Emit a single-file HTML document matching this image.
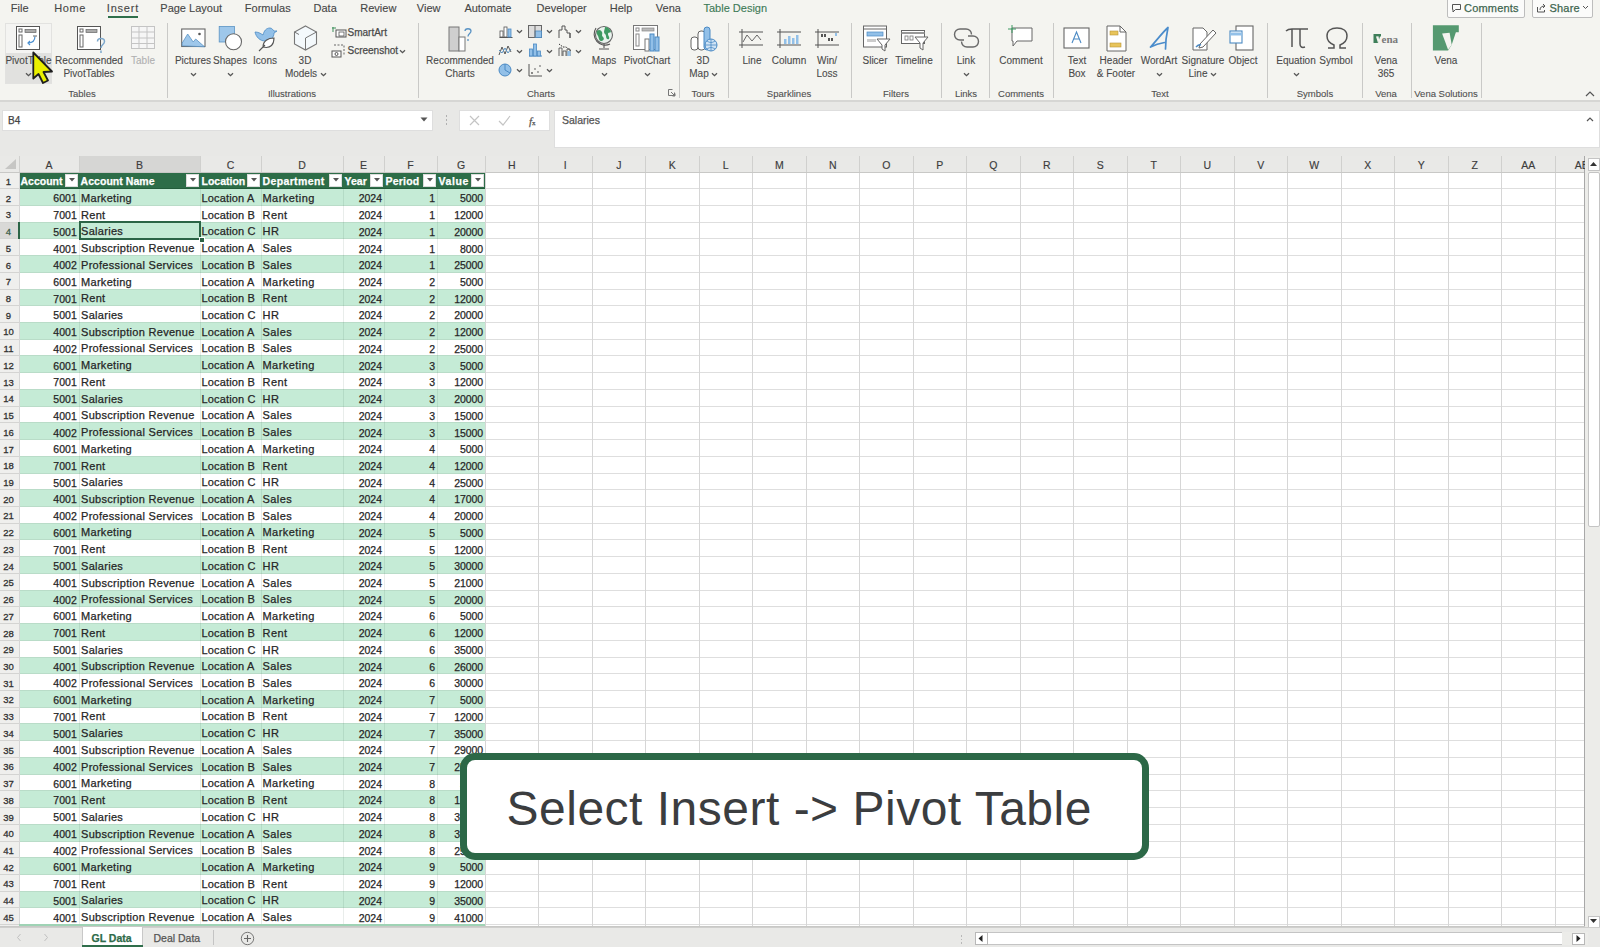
<!DOCTYPE html><html><head><meta charset="utf-8"><style>
html,body{margin:0;padding:0} body{width:1600px;height:947px;overflow:hidden;position:relative;background:#f4f4f0;font-family:"Liberation Sans", sans-serif}
.t{position:absolute;white-space:nowrap;-webkit-text-stroke:0.25px currentColor}.b{position:absolute}
</style></head><body>
<div class="t" style="left:10.80px;top:3.19px;font-size:11px;line-height:11px;color:#474747;font-weight:normal;-webkit-text-stroke:0.12px currentColor;letter-spacing:0px">File</div>
<div class="t" style="left:54.30px;top:3.19px;font-size:11px;line-height:11px;color:#474747;font-weight:normal;-webkit-text-stroke:0.12px currentColor;letter-spacing:0.6px">Home</div>
<div class="t" style="left:106.80px;top:3.19px;font-size:11px;line-height:11px;color:#474747;font-weight:normal;-webkit-text-stroke:0.12px currentColor;letter-spacing:0.8px">Insert</div>
<div class="t" style="left:160.30px;top:3.19px;font-size:11px;line-height:11px;color:#474747;font-weight:normal;-webkit-text-stroke:0.12px currentColor;letter-spacing:0px">Page Layout</div>
<div class="t" style="left:244.80px;top:3.19px;font-size:11px;line-height:11px;color:#474747;font-weight:normal;-webkit-text-stroke:0.12px currentColor;letter-spacing:0px">Formulas</div>
<div class="t" style="left:313.55px;top:3.19px;font-size:11px;line-height:11px;color:#474747;font-weight:normal;-webkit-text-stroke:0.12px currentColor;letter-spacing:0px">Data</div>
<div class="t" style="left:360.30px;top:3.19px;font-size:11px;line-height:11px;color:#474747;font-weight:normal;-webkit-text-stroke:0.12px currentColor;letter-spacing:0px">Review</div>
<div class="t" style="left:416.80px;top:3.19px;font-size:11px;line-height:11px;color:#474747;font-weight:normal;-webkit-text-stroke:0.12px currentColor;letter-spacing:0px">View</div>
<div class="t" style="left:464.40px;top:3.19px;font-size:11px;line-height:11px;color:#474747;font-weight:normal;-webkit-text-stroke:0.12px currentColor;letter-spacing:0px">Automate</div>
<div class="t" style="left:536.60px;top:3.19px;font-size:11px;line-height:11px;color:#474747;font-weight:normal;-webkit-text-stroke:0.12px currentColor;letter-spacing:0px">Developer</div>
<div class="t" style="left:609.80px;top:3.19px;font-size:11px;line-height:11px;color:#474747;font-weight:normal;-webkit-text-stroke:0.12px currentColor;letter-spacing:0px">Help</div>
<div class="t" style="left:655.80px;top:3.19px;font-size:11px;line-height:11px;color:#474747;font-weight:normal;-webkit-text-stroke:0.12px currentColor;letter-spacing:0px">Vena</div>
<div class="t" style="left:703.50px;top:3.19px;font-size:11px;line-height:11px;color:#3d7a56;font-weight:normal;-webkit-text-stroke:0.12px currentColor;letter-spacing:0px">Table Design</div>
<div class="b" style="left:108.00px;top:16.00px;width:30.00px;height:2.00px;background:#2f6f4b"></div>
<div class="b" style="left:1447.00px;top:-2.00px;width:78.00px;height:19.50px;border:1px solid #bdbdbd;background:#fbfbfa;box-sizing:border-box;border-radius:2px"></div>
<div class="t" style="left:1464.00px;top:2.69px;font-size:11px;line-height:11px;color:#3f6650;font-weight:normal;letter-spacing:0.2px">Comments</div>
<svg class="b" style="left:1451px;top:3px;" width="11" height="10" viewBox="0 0 11 10"><path d="M1.5 1.5h8v5h-5l-2.5 2.5v-2.5h-0.5z" fill="none" stroke="#555" stroke-width="1"/></svg>
<div class="b" style="left:1532.00px;top:-2.00px;width:61.00px;height:19.50px;border:1px solid #bdbdbd;background:#fbfbfa;box-sizing:border-box;border-radius:2px"></div>
<div class="t" style="left:1549.50px;top:2.69px;font-size:11px;line-height:11px;color:#3f6650;font-weight:normal;letter-spacing:0.2px">Share</div>
<svg class="b" style="left:1536px;top:3px;" width="11" height="10" viewBox="0 0 11 10"><path d="M1.5 4v5h7v-2" fill="none" stroke="#555"/><path d="M4 7c0-3 2-4 5-4M7 1l2 2-2 2" fill="none" stroke="#555"/></svg>
<svg class="b" style="left:1582px;top:5px;" width="7" height="5" viewBox="0 0 7 5"><path d="M1 1l2.5 2.5L6 1" fill="none" stroke="#555"/></svg>
<div class="b" style="left:166.50px;top:23.00px;width:1.20px;height:75.00px;background:#c9c9c7"></div>
<div class="b" style="left:418.00px;top:23.00px;width:1.20px;height:75.00px;background:#c9c9c7"></div>
<div class="b" style="left:678.50px;top:23.00px;width:1.20px;height:75.00px;background:#c9c9c7"></div>
<div class="b" style="left:727.50px;top:23.00px;width:1.20px;height:75.00px;background:#c9c9c7"></div>
<div class="b" style="left:851.00px;top:23.00px;width:1.20px;height:75.00px;background:#c9c9c7"></div>
<div class="b" style="left:941.00px;top:23.00px;width:1.20px;height:75.00px;background:#c9c9c7"></div>
<div class="b" style="left:989.30px;top:23.00px;width:1.20px;height:75.00px;background:#c9c9c7"></div>
<div class="b" style="left:1052.50px;top:23.00px;width:1.20px;height:75.00px;background:#c9c9c7"></div>
<div class="b" style="left:1267.00px;top:23.00px;width:1.20px;height:75.00px;background:#c9c9c7"></div>
<div class="b" style="left:1361.50px;top:23.00px;width:1.20px;height:75.00px;background:#c9c9c7"></div>
<div class="b" style="left:1410.50px;top:23.00px;width:1.20px;height:75.00px;background:#c9c9c7"></div>
<div class="b" style="left:1480.50px;top:23.00px;width:1.20px;height:75.00px;background:#c9c9c7"></div>
<div class="t" style="left:22.00px;top:89.16px;width:120px;text-align:center;font-size:9.5px;line-height:9.5px;color:#4f4f4f;font-weight:normal;-webkit-text-stroke:0.1px currentColor">Tables</div>
<div class="t" style="left:232.00px;top:89.16px;width:120px;text-align:center;font-size:9.5px;line-height:9.5px;color:#4f4f4f;font-weight:normal;-webkit-text-stroke:0.1px currentColor">Illustrations</div>
<div class="t" style="left:481.00px;top:89.16px;width:120px;text-align:center;font-size:9.5px;line-height:9.5px;color:#4f4f4f;font-weight:normal;-webkit-text-stroke:0.1px currentColor">Charts</div>
<div class="t" style="left:643.00px;top:89.16px;width:120px;text-align:center;font-size:9.5px;line-height:9.5px;color:#4f4f4f;font-weight:normal;-webkit-text-stroke:0.1px currentColor">Tours</div>
<div class="t" style="left:729.00px;top:89.16px;width:120px;text-align:center;font-size:9.5px;line-height:9.5px;color:#4f4f4f;font-weight:normal;-webkit-text-stroke:0.1px currentColor">Sparklines</div>
<div class="t" style="left:836.00px;top:89.16px;width:120px;text-align:center;font-size:9.5px;line-height:9.5px;color:#4f4f4f;font-weight:normal;-webkit-text-stroke:0.1px currentColor">Filters</div>
<div class="t" style="left:906.00px;top:89.16px;width:120px;text-align:center;font-size:9.5px;line-height:9.5px;color:#4f4f4f;font-weight:normal;-webkit-text-stroke:0.1px currentColor">Links</div>
<div class="t" style="left:961.00px;top:89.16px;width:120px;text-align:center;font-size:9.5px;line-height:9.5px;color:#4f4f4f;font-weight:normal;-webkit-text-stroke:0.1px currentColor">Comments</div>
<div class="t" style="left:1100.00px;top:89.16px;width:120px;text-align:center;font-size:9.5px;line-height:9.5px;color:#4f4f4f;font-weight:normal;-webkit-text-stroke:0.1px currentColor">Text</div>
<div class="t" style="left:1255.00px;top:89.16px;width:120px;text-align:center;font-size:9.5px;line-height:9.5px;color:#4f4f4f;font-weight:normal;-webkit-text-stroke:0.1px currentColor">Symbols</div>
<div class="t" style="left:1326.00px;top:89.16px;width:120px;text-align:center;font-size:9.5px;line-height:9.5px;color:#4f4f4f;font-weight:normal;-webkit-text-stroke:0.1px currentColor">Vena</div>
<div class="t" style="left:1386.00px;top:89.16px;width:120px;text-align:center;font-size:9.5px;line-height:9.5px;color:#4f4f4f;font-weight:normal;-webkit-text-stroke:0.1px currentColor">Vena Solutions</div>
<svg class="b" style="left:668px;top:89px;" width="8" height="8" viewBox="0 0 8 8"><path d="M0.5 0.5h4M0.5 0.5v6h6v-3" fill="none" stroke="#777"/><path d="M3 3l4 4M7 4.5v2.5h-2.5" fill="none" stroke="#777"/></svg>
<svg class="b" style="left:1585px;top:91px;" width="10" height="6" viewBox="0 0 10 6"><path d="M1 5l4-4 4 4" fill="none" stroke="#555" stroke-width="1.2"/></svg>
<div class="b" style="left:5.00px;top:22.50px;width:47.00px;height:61.00px;border:1px solid #e2e2e0;box-sizing:border-box;background:#f4f4f2"></div>
<div class="b" style="left:5.50px;top:53.00px;width:46.00px;height:30.00px;background:#e1e1df"></div>
<svg class="b" style="left:16px;top:26px;" width="26" height="25" viewBox="0 0 26 25"><rect x="0.5" y="0.5" width="23" height="23" fill="#fff" stroke="#555"/><rect x="3" y="3" width="3" height="3" fill="none" stroke="#666"/><rect x="9" y="3.5" width="11" height="3" fill="#aaa" stroke="#666" stroke-width="0.7"/><rect x="3" y="9" width="3" height="12" fill="none" stroke="#666"/><path d="M19 10c0 5-2 7-7 7M14 15l-2 2 2 2" fill="none" stroke="#4a8fd0" stroke-width="1.2"/><path d="M17 10h4" stroke="#999" stroke-width="1.5"/></svg>
<div class="t" style="left:-31.50px;top:55.53px;width:120px;text-align:center;font-size:10px;line-height:10px;color:#4a4a4a;font-weight:normal;-webkit-text-stroke:0.1px currentColor">PivotTable</div>
<svg class="b" style="left:25px;top:72px;" width="7" height="5" viewBox="0 0 7 5"><path d="M1 1.2l2.5 2.5L6 1.2" fill="none" stroke="#555" stroke-width="1.3"/></svg>
<svg class="b" style="left:77px;top:26px;" width="30" height="29" viewBox="0 0 30 29"><rect x="0.5" y="0.5" width="23" height="23" fill="#fff" stroke="#555"/><rect x="3" y="3" width="3" height="3" fill="none" stroke="#666"/><rect x="9" y="3.5" width="11" height="3" fill="#aaa" stroke="#666" stroke-width="0.7"/><rect x="3" y="9" width="3" height="12" fill="none" stroke="#666"/><path d="M20.5 15.5c0-4 7-4 7 0 0 3-3.5 3-3.5 6.5" fill="none" stroke="#7ea8cc" stroke-width="1.5"/><path d="M24 24.5v2.5" stroke="#7ea8cc" stroke-width="1.5"/></svg>
<div class="t" style="left:29.00px;top:55.53px;width:120px;text-align:center;font-size:10px;line-height:10px;color:#4a4a4a;font-weight:normal;-webkit-text-stroke:0.1px currentColor">Recommended</div>
<div class="t" style="left:29.00px;top:68.53px;width:120px;text-align:center;font-size:10px;line-height:10px;color:#4a4a4a;font-weight:normal;-webkit-text-stroke:0.1px currentColor">PivotTables</div>
<svg class="b" style="left:131px;top:26px;" width="25" height="24" viewBox="0 0 25 24"><rect x="0.5" y="0.5" width="23" height="22" fill="#f6f6f6" stroke="#c4c4c4"/><path d="M0.5 6h23M0.5 12h23M0.5 17.5h23M8 0.5v22M16 0.5v22" stroke="#c4c4c4" fill="none"/></svg>
<div class="t" style="left:83.00px;top:55.53px;width:120px;text-align:center;font-size:10px;line-height:10px;color:#b0b0b0;font-weight:normal;-webkit-text-stroke:0.1px currentColor">Table</div>
<svg class="b" style="left:181px;top:28px;" width="25" height="20" viewBox="0 0 25 20"><rect x="0.7" y="1" width="23.3" height="17.5" fill="#fff" stroke="#666" stroke-width="1.1"/><path d="M1.2 17.8V15l5.5-9 5.5 8 2.5-3 8.8 7.8z" fill="#9ec7ea" stroke="#5a93c4" stroke-width="0.8"/><circle cx="18.5" cy="6" r="1.3" fill="#555"/></svg>
<div class="t" style="left:133.00px;top:55.53px;width:120px;text-align:center;font-size:10px;line-height:10px;color:#4a4a4a;font-weight:normal;-webkit-text-stroke:0.1px currentColor">Pictures</div>
<svg class="b" style="left:190px;top:72px;" width="7" height="5" viewBox="0 0 7 5"><path d="M1 1.2l2.5 2.5L6 1.2" fill="none" stroke="#555" stroke-width="1.3"/></svg>
<svg class="b" style="left:218px;top:25px;" width="27" height="28" viewBox="0 0 27 28"><rect x="1.2" y="1.5" width="15.3" height="15.5" fill="#9ec7ea" stroke="#5a93c4" stroke-width="0.8"/><circle cx="15.5" cy="16.8" r="8" fill="#fff" stroke="#666" stroke-width="1.1"/></svg>
<div class="t" style="left:170.00px;top:55.53px;width:120px;text-align:center;font-size:10px;line-height:10px;color:#4a4a4a;font-weight:normal;-webkit-text-stroke:0.1px currentColor">Shapes</div>
<svg class="b" style="left:227px;top:72px;" width="7" height="5" viewBox="0 0 7 5"><path d="M1 1.2l2.5 2.5L6 1.2" fill="none" stroke="#555" stroke-width="1.3"/></svg>
<svg class="b" style="left:253px;top:25px;" width="26" height="28" viewBox="0 0 26 28"><path d="M2 7c3 0 5 1 8 3 1-4 3-7 7-7 2 0 3 2 4 3h3l-3 2c0 4-3 8-9 8-5 0-9-4-10-9z" fill="#92c0e8" stroke="#4b8ac4" stroke-width="0.8"/><path d="M6 26l6-6M10 22c0-6 5-9 11-9 0 6-3 11-11 9z" fill="#fff" stroke="#555" stroke-width="1.1"/></svg>
<div class="t" style="left:205.00px;top:55.53px;width:120px;text-align:center;font-size:10px;line-height:10px;color:#4a4a4a;font-weight:normal;-webkit-text-stroke:0.1px currentColor">Icons</div>
<svg class="b" style="left:293px;top:25px;" width="26" height="27" viewBox="0 0 26 27"><path d="M12.5 1l11 6v12l-11 6-11-6v-12z" fill="#f4f9fc" stroke="#777" stroke-width="1.1"/><path d="M12.5 13l11-6M12.5 13v12" fill="none" stroke="#777" stroke-width="1"/><path d="M1.5 7l4.5 2.5" stroke="#777" stroke-width="1"/></svg>
<div class="t" style="left:245.00px;top:55.53px;width:120px;text-align:center;font-size:10px;line-height:10px;color:#4a4a4a;font-weight:normal;-webkit-text-stroke:0.1px currentColor">3D</div>
<div class="t" style="left:241.00px;top:69.03px;width:120px;text-align:center;font-size:10px;line-height:10px;color:#4a4a4a;font-weight:normal;-webkit-text-stroke:0.1px currentColor">Models</div>
<svg class="b" style="left:320px;top:72px;" width="7" height="5" viewBox="0 0 7 5"><path d="M1 1.2l2.5 2.5L6 1.2" fill="none" stroke="#555" stroke-width="1.3"/></svg>
<svg class="b" style="left:331px;top:26px;" width="17" height="12" viewBox="0 0 17 12"><path d="M1 2h4M2 1v5" stroke="#3d8f5a" fill="none"/><rect x="5" y="4" width="10" height="7" fill="#fff" stroke="#555"/><rect x="8" y="6" width="5" height="4" fill="none" stroke="#555" stroke-width="0.8"/></svg>
<div class="t" style="left:347.50px;top:27.54px;font-size:10px;line-height:10px;color:#4a4a4a;font-weight:normal;">SmartArt</div>
<svg class="b" style="left:331px;top:44px;" width="17" height="14" viewBox="0 0 17 14"><path d="M3 1h10v10" stroke="#666" stroke-dasharray="2 1.5" fill="none"/><rect x="1" y="7" width="9" height="6" fill="#fff" stroke="#555"/><circle cx="5.5" cy="10" r="1.5" fill="none" stroke="#555"/></svg>
<div class="t" style="left:347.50px;top:46.03px;font-size:10px;line-height:10px;color:#4a4a4a;font-weight:normal;">Screenshot</div>
<svg class="b" style="left:399px;top:49px;" width="7" height="5" viewBox="0 0 7 5"><path d="M1 1.2l2.5 2.5L6 1.2" fill="none" stroke="#555" stroke-width="1.3"/></svg>
<svg class="b" style="left:448px;top:26px;" width="28" height="27" viewBox="0 0 28 27"><rect x="1" y="1" width="10" height="24" fill="#cfcfcf" stroke="#777"/><rect x="11" y="11" width="6" height="14" fill="#fff" stroke="#777"/><path d="M17 5c0-3 6-3 6 0 0 2.5-3 2.5-3 5.5M20 13v2" fill="none" stroke="#5a93c4" stroke-width="1.3"/></svg>
<div class="t" style="left:400.00px;top:55.53px;width:120px;text-align:center;font-size:10px;line-height:10px;color:#4a4a4a;font-weight:normal;-webkit-text-stroke:0.1px currentColor">Recommended</div>
<div class="t" style="left:400.00px;top:68.53px;width:120px;text-align:center;font-size:10px;line-height:10px;color:#4a4a4a;font-weight:normal;-webkit-text-stroke:0.1px currentColor">Charts</div>
<svg class="b" style="left:499px;top:25px;" width="14" height="13" viewBox="0 0 14 13"><path d="M0.5 12.5h13" stroke="#555"/><rect x="1" y="6" width="3" height="6" fill="#fff" stroke="#555" stroke-width="0.8"/><rect x="5" y="2" width="3" height="10" fill="#fff" stroke="#555" stroke-width="0.8"/><rect x="9" y="4" width="3" height="8" fill="#92c0e8" stroke="#4b8ac4" stroke-width="0.8"/></svg>
<svg class="b" style="left:516px;top:29px;" width="7" height="5" viewBox="0 0 7 5"><path d="M1 1.2l2.5 2.5L6 1.2" fill="none" stroke="#555" stroke-width="1.3"/></svg>
<svg class="b" style="left:498px;top:44px;" width="15" height="13" viewBox="0 0 15 13"><path d="M1 11l3-8 3 7 3-8 3 6" fill="none" stroke="#555" stroke-width="1"/><path d="M1 6l3 3 3-5 3 5 3-4" fill="none" stroke="#5a93c4" stroke-width="1"/></svg>
<svg class="b" style="left:516px;top:49px;" width="7" height="5" viewBox="0 0 7 5"><path d="M1 1.2l2.5 2.5L6 1.2" fill="none" stroke="#555" stroke-width="1.3"/></svg>
<svg class="b" style="left:498px;top:63px;" width="15" height="15" viewBox="0 0 15 15"><circle cx="7" cy="7" r="6" fill="#92c0e8" stroke="#4b8ac4"/><path d="M7 7V1M7 7l5 3" stroke="#4b8ac4" fill="none"/></svg>
<svg class="b" style="left:516px;top:68px;" width="7" height="5" viewBox="0 0 7 5"><path d="M1 1.2l2.5 2.5L6 1.2" fill="none" stroke="#555" stroke-width="1.3"/></svg>
<svg class="b" style="left:528px;top:25px;" width="15" height="14" viewBox="0 0 15 14"><rect x="0.5" y="0.5" width="13" height="12" fill="#ddd" stroke="#666"/><rect x="7" y="6" width="6.5" height="6.5" fill="#92c0e8" stroke="#4b8ac4" stroke-width="0.8"/><path d="M7 0.5v12" stroke="#666"/></svg>
<svg class="b" style="left:546px;top:29px;" width="7" height="5" viewBox="0 0 7 5"><path d="M1 1.2l2.5 2.5L6 1.2" fill="none" stroke="#555" stroke-width="1.3"/></svg>
<svg class="b" style="left:528px;top:43px;" width="15" height="14" viewBox="0 0 15 14"><path d="M1 13h13" stroke="#4b8ac4"/><rect x="1.5" y="6" width="3" height="7" fill="#92c0e8" stroke="#4b8ac4" stroke-width="0.8"/><rect x="5.5" y="1" width="3" height="12" fill="#92c0e8" stroke="#4b8ac4" stroke-width="0.8"/><rect x="9.5" y="8" width="3" height="5" fill="#92c0e8" stroke="#4b8ac4" stroke-width="0.8"/></svg>
<svg class="b" style="left:546px;top:49px;" width="7" height="5" viewBox="0 0 7 5"><path d="M1 1.2l2.5 2.5L6 1.2" fill="none" stroke="#555" stroke-width="1.3"/></svg>
<svg class="b" style="left:528px;top:63px;" width="15" height="14" viewBox="0 0 15 14"><path d="M1 1v12h13" stroke="#555" fill="none"/><circle cx="4" cy="10" r="0.9" fill="#555"/><circle cx="7" cy="6" r="0.9" fill="#888"/><circle cx="10" cy="9" r="0.9" fill="#888"/><circle cx="12" cy="3" r="0.9" fill="#888"/></svg>
<svg class="b" style="left:546px;top:68px;" width="7" height="5" viewBox="0 0 7 5"><path d="M1 1.2l2.5 2.5L6 1.2" fill="none" stroke="#555" stroke-width="1.3"/></svg>
<svg class="b" style="left:558px;top:24px;" width="15" height="15" viewBox="0 0 15 15"><path d="M1 14V6h3V2h3v4h2v3h3v5" fill="none" stroke="#555"/><path d="M12 9v5" stroke="#555"/></svg>
<svg class="b" style="left:575px;top:29px;" width="7" height="5" viewBox="0 0 7 5"><path d="M1 1.2l2.5 2.5L6 1.2" fill="none" stroke="#555" stroke-width="1.3"/></svg>
<svg class="b" style="left:558px;top:43px;" width="15" height="14" viewBox="0 0 15 14"><path d="M1 13V5h3v8M5 13V8h3v5M9 13V6h3v7" fill="none" stroke="#555" stroke-width="0.9"/><path d="M1 1l4 3 3 0 5 4" stroke="#333" fill="none" stroke-dasharray="1.5 1"/><rect x="9.5" y="8" width="3" height="5" fill="#92c0e8"/></svg>
<svg class="b" style="left:575px;top:49px;" width="7" height="5" viewBox="0 0 7 5"><path d="M1 1.2l2.5 2.5L6 1.2" fill="none" stroke="#555" stroke-width="1.3"/></svg>
<svg class="b" style="left:593px;top:24px;" width="22" height="28" viewBox="0 0 22 28"><circle cx="11" cy="11" r="8.5" fill="#eaf3ee" stroke="#666" stroke-width="1.1"/><path d="M4 7c2-2 4-1 5 1s-1 3 1 5 0 4-2 4-2-3-3-5-2-3-1-5zM12 3c3 0 5 2 6 5-1 1-3 0-3 2s2 3 1 5c-2 1-3-1-3-3s-2-2-2-4 1-3 1-5z" fill="#3e9a62"/><path d="M11 20v4M6 25h10M3 4A11 11 0 0 0 17 20" fill="none" stroke="#555" stroke-width="1.1"/></svg>
<div class="t" style="left:544.00px;top:55.53px;width:120px;text-align:center;font-size:10px;line-height:10px;color:#4a4a4a;font-weight:normal;-webkit-text-stroke:0.1px currentColor">Maps</div>
<svg class="b" style="left:601px;top:72px;" width="7" height="5" viewBox="0 0 7 5"><path d="M1 1.2l2.5 2.5L6 1.2" fill="none" stroke="#555" stroke-width="1.3"/></svg>
<svg class="b" style="left:633px;top:25px;" width="29" height="28" viewBox="0 0 29 28"><rect x="0.5" y="0.5" width="24" height="24" fill="#fff" stroke="#777"/><rect x="3" y="3" width="3" height="3" fill="none" stroke="#888"/><rect x="9" y="3" width="12" height="3" fill="#bbb" stroke="#888" stroke-width="0.7"/><rect x="3" y="9" width="3" height="12" fill="none" stroke="#888"/><rect x="12" y="14" width="4" height="12" fill="#fff" stroke="#777"/><rect x="17" y="9" width="4" height="17" fill="#92c0e8" stroke="#4b8ac4"/><rect x="22" y="12" width="4" height="14" fill="#92c0e8" stroke="#4b8ac4"/></svg>
<div class="t" style="left:587.00px;top:55.53px;width:120px;text-align:center;font-size:10px;line-height:10px;color:#4a4a4a;font-weight:normal;-webkit-text-stroke:0.1px currentColor">PivotChart</div>
<svg class="b" style="left:644px;top:72px;" width="7" height="5" viewBox="0 0 7 5"><path d="M1 1.2l2.5 2.5L6 1.2" fill="none" stroke="#555" stroke-width="1.3"/></svg>
<svg class="b" style="left:690px;top:26px;" width="28" height="27" viewBox="0 0 28 27"><rect x="1" y="11" width="7" height="13" rx="3" fill="#fff" stroke="#666"/><rect x="8" y="5" width="7" height="19" rx="3" fill="#fff" stroke="#666"/><rect x="14" y="1" width="6" height="23" rx="3" fill="#92c0e8" stroke="#4b8ac4"/><circle cx="21" cy="19" r="6" fill="#cfe3f5" stroke="#4b8ac4"/><path d="M15 19h12M21 13v12M17 15c3 2 5 2 8 0M17 23c3-2 5-2 8 0" stroke="#4b8ac4" fill="none" stroke-width="0.8"/></svg>
<div class="t" style="left:643.00px;top:55.53px;width:120px;text-align:center;font-size:10px;line-height:10px;color:#4a4a4a;font-weight:normal;-webkit-text-stroke:0.1px currentColor">3D</div>
<div class="t" style="left:639.00px;top:69.03px;width:120px;text-align:center;font-size:10px;line-height:10px;color:#4a4a4a;font-weight:normal;-webkit-text-stroke:0.1px currentColor">Map</div>
<svg class="b" style="left:711px;top:72px;" width="7" height="5" viewBox="0 0 7 5"><path d="M1 1.2l2.5 2.5L6 1.2" fill="none" stroke="#555" stroke-width="1.3"/></svg>
<svg class="b" style="left:739px;top:28px;" width="25" height="21" viewBox="0 0 25 21"><path d="M3 1v19M0 4h24M0 17h24" stroke="#555" fill="none"/><path d="M4 14l4-7 5 6 5-6 4 5" fill="none" stroke="#666" stroke-width="1"/></svg>
<div class="t" style="left:692.00px;top:55.53px;width:120px;text-align:center;font-size:10px;line-height:10px;color:#4a4a4a;font-weight:normal;-webkit-text-stroke:0.1px currentColor">Line</div>
<svg class="b" style="left:777px;top:28px;" width="25" height="21" viewBox="0 0 25 21"><path d="M3 1v19M0 4h24M0 17h24" stroke="#555" fill="none"/><rect x="7" y="11" width="2.5" height="5" fill="#92c0e8"/><rect x="11" y="8" width="2.5" height="8" fill="#92c0e8"/><rect x="15" y="10" width="2.5" height="6" fill="#92c0e8"/><rect x="19" y="7" width="2.5" height="9" fill="#92c0e8"/></svg>
<div class="t" style="left:729.00px;top:55.53px;width:120px;text-align:center;font-size:10px;line-height:10px;color:#4a4a4a;font-weight:normal;-webkit-text-stroke:0.1px currentColor">Column</div>
<svg class="b" style="left:815px;top:28px;" width="25" height="21" viewBox="0 0 25 21"><path d="M3 1v19M0 4h24M0 17h24" stroke="#555" fill="none"/><rect x="6" y="6" width="2" height="3" fill="#555"/><rect x="9" y="6" width="2" height="3" fill="#555"/><rect x="13" y="10" width="2" height="3" fill="#555"/><rect x="16" y="10" width="2" height="3" fill="#555"/><rect x="20" y="5" width="2" height="3" fill="#92c0e8"/></svg>
<div class="t" style="left:767.00px;top:55.53px;width:120px;text-align:center;font-size:10px;line-height:10px;color:#4a4a4a;font-weight:normal;-webkit-text-stroke:0.1px currentColor">Win/</div>
<div class="t" style="left:767.00px;top:69.03px;width:120px;text-align:center;font-size:10px;line-height:10px;color:#4a4a4a;font-weight:normal;-webkit-text-stroke:0.1px currentColor">Loss</div>
<svg class="b" style="left:863px;top:25px;" width="28" height="27" viewBox="0 0 28 27"><rect x="0.5" y="1" width="23" height="21" fill="#fff" stroke="#666"/><path d="M0.5 4h23" stroke="#666"/><rect x="4" y="7" width="16" height="4" fill="#92c0e8" stroke="#4b8ac4" stroke-width="0.7"/><rect x="4" y="14" width="9" height="3" fill="#ccc"/><path d="M14 14h13l-5 6v6l-3-2v-4z" fill="#fff" stroke="#666"/></svg>
<div class="t" style="left:815.00px;top:55.53px;width:120px;text-align:center;font-size:10px;line-height:10px;color:#4a4a4a;font-weight:normal;-webkit-text-stroke:0.1px currentColor">Slicer</div>
<svg class="b" style="left:901px;top:30px;" width="28" height="23" viewBox="0 0 28 23"><rect x="0.5" y="0.5" width="23" height="13" fill="#fff" stroke="#666"/><path d="M0.5 3h23" stroke="#999" stroke-width="2"/><rect x="4" y="6" width="3" height="4" fill="none" stroke="#777" stroke-width="0.8"/><rect x="9" y="6" width="3" height="4" fill="none" stroke="#777" stroke-width="0.8"/><path d="M14 7h13l-5 6v7l-3-2v-5z" fill="#fff" stroke="#666"/></svg>
<div class="t" style="left:854.00px;top:55.53px;width:120px;text-align:center;font-size:10px;line-height:10px;color:#4a4a4a;font-weight:normal;-webkit-text-stroke:0.1px currentColor">Timeline</div>
<svg class="b" style="left:953px;top:28px;" width="27" height="21" viewBox="0 0 27 21"><path d="M11 12H7A5.5 5.5 0 0 1 7 1h6a5.5 5.5 0 0 1 5.5 5.5" fill="none" stroke="#6a6a6a" stroke-width="1.4"/><path d="M15 8h5a5.5 5.5 0 0 1 0 11h-6a5.5 5.5 0 0 1-5.5-5.5" fill="none" stroke="#6a6a6a" stroke-width="1.4"/></svg>
<div class="t" style="left:906.00px;top:55.53px;width:120px;text-align:center;font-size:10px;line-height:10px;color:#4a4a4a;font-weight:normal;-webkit-text-stroke:0.1px currentColor">Link</div>
<svg class="b" style="left:963px;top:72px;" width="7" height="5" viewBox="0 0 7 5"><path d="M1 1.2l2.5 2.5L6 1.2" fill="none" stroke="#555" stroke-width="1.3"/></svg>
<svg class="b" style="left:1007px;top:25px;" width="28" height="26" viewBox="0 0 28 26"><path d="M5 3h20v13H10l-4 5v-5H5z" fill="#fff" stroke="#666" stroke-width="1"/><path d="M1 4h8M5 0v8" stroke="#3d9a62" stroke-width="1"/></svg>
<div class="t" style="left:961.00px;top:55.53px;width:120px;text-align:center;font-size:10px;line-height:10px;color:#4a4a4a;font-weight:normal;-webkit-text-stroke:0.1px currentColor">Comment</div>
<svg class="b" style="left:1063px;top:27px;" width="28" height="24" viewBox="0 0 28 24"><rect x="1" y="1" width="25" height="20" fill="#fff" stroke="#666" stroke-width="1.1"/><path d="M9 16l4.5-11 4.5 11M10.5 12h6" fill="none" stroke="#4b8ac4" stroke-width="1.1"/></svg>
<div class="t" style="left:1017.00px;top:55.53px;width:120px;text-align:center;font-size:10px;line-height:10px;color:#4a4a4a;font-weight:normal;-webkit-text-stroke:0.1px currentColor">Text</div>
<div class="t" style="left:1017.00px;top:69.03px;width:120px;text-align:center;font-size:10px;line-height:10px;color:#4a4a4a;font-weight:normal;-webkit-text-stroke:0.1px currentColor">Box</div>
<svg class="b" style="left:1106px;top:25px;" width="22" height="27" viewBox="0 0 22 27"><path d="M1 1h13l6 6v19H1z" fill="#fff" stroke="#666"/><path d="M14 1v6h6" fill="none" stroke="#666"/><rect x="4" y="6" width="8" height="4" fill="#e8c45a" stroke="#b8963a" stroke-width="0.6"/><rect x="4" y="18" width="11" height="4" fill="#e8c45a" stroke="#b8963a" stroke-width="0.6"/></svg>
<div class="t" style="left:1056.00px;top:55.53px;width:120px;text-align:center;font-size:10px;line-height:10px;color:#4a4a4a;font-weight:normal;-webkit-text-stroke:0.1px currentColor">Header</div>
<div class="t" style="left:1056.00px;top:69.03px;width:120px;text-align:center;font-size:10px;line-height:10px;color:#4a4a4a;font-weight:normal;-webkit-text-stroke:0.1px currentColor">&amp; Footer</div>
<svg class="b" style="left:1148px;top:26px;" width="23" height="26" viewBox="0 0 23 26"><path d="M2.5 21c3-1.5 8-3.5 14-4.5M3 20.5C9 14 14 7 20 1.5c-1.5 7-2.5 14-2.5 21.5" fill="none" stroke="#4a8ccb" stroke-width="1.7" stroke-linecap="round" stroke-linejoin="round"/></svg>
<div class="t" style="left:1099.00px;top:55.53px;width:120px;text-align:center;font-size:10px;line-height:10px;color:#4a4a4a;font-weight:normal;-webkit-text-stroke:0.1px currentColor">WordArt</div>
<svg class="b" style="left:1156px;top:72px;" width="7" height="5" viewBox="0 0 7 5"><path d="M1 1.2l2.5 2.5L6 1.2" fill="none" stroke="#555" stroke-width="1.3"/></svg>
<svg class="b" style="left:1192px;top:25px;" width="26" height="27" viewBox="0 0 26 27"><path d="M1 3h10l4 4v18H1z" fill="#fff" stroke="#666"/><path d="M8 19l13-14 3 3-13 14-4 1z" fill="#fff" stroke="#666"/><path d="M4 22c2-2 3-3 5-2" stroke="#4b8ac4" fill="none" stroke-width="1.5"/></svg>
<div class="t" style="left:1143.00px;top:55.53px;width:120px;text-align:center;font-size:10px;line-height:10px;color:#4a4a4a;font-weight:normal;-webkit-text-stroke:0.1px currentColor">Signature</div>
<div class="t" style="left:1138.00px;top:69.03px;width:120px;text-align:center;font-size:10px;line-height:10px;color:#4a4a4a;font-weight:normal;-webkit-text-stroke:0.1px currentColor">Line</div>
<svg class="b" style="left:1210px;top:72px;" width="7" height="5" viewBox="0 0 7 5"><path d="M1 1.2l2.5 2.5L6 1.2" fill="none" stroke="#555" stroke-width="1.3"/></svg>
<svg class="b" style="left:1229px;top:25px;" width="26" height="27" viewBox="0 0 26 27"><rect x="7" y="1" width="17" height="24" fill="#fff" stroke="#666" stroke-width="1.1"/><rect x="1" y="6" width="12" height="12" fill="#fff" stroke="#4b8ac4" stroke-width="1.1"/><path d="M1 9h12" stroke="#92c0e8" stroke-width="3"/></svg>
<div class="t" style="left:1183.00px;top:55.53px;width:120px;text-align:center;font-size:10px;line-height:10px;color:#4a4a4a;font-weight:normal;-webkit-text-stroke:0.1px currentColor">Object</div>
<svg class="b" style="left:1285px;top:27px;" width="24" height="22" viewBox="0 0 24 22"><path d="M1 4c2-2 3-2 6-2h16M7 2v18M15 2v15c0 3 2 4 5 3" fill="none" stroke="#555" stroke-width="1.5"/></svg>
<div class="t" style="left:1236.00px;top:55.53px;width:120px;text-align:center;font-size:10px;line-height:10px;color:#4a4a4a;font-weight:normal;-webkit-text-stroke:0.1px currentColor">Equation</div>
<svg class="b" style="left:1293px;top:72px;" width="7" height="5" viewBox="0 0 7 5"><path d="M1 1.2l2.5 2.5L6 1.2" fill="none" stroke="#555" stroke-width="1.3"/></svg>
<svg class="b" style="left:1325px;top:27px;" width="24" height="23" viewBox="0 0 24 23"><path d="M3 21h6v-3C4 16 2 12 2 9 2 4 6 1 12 1s10 3 10 8c0 3-2 7-7 9v3h6" fill="none" stroke="#555" stroke-width="1.5"/></svg>
<div class="t" style="left:1276.00px;top:55.53px;width:120px;text-align:center;font-size:10px;line-height:10px;color:#4a4a4a;font-weight:normal;-webkit-text-stroke:0.1px currentColor">Symbol</div>
<svg class="b" style="left:1372px;top:33px;" width="30" height="12" viewBox="0 0 30 12"><path d="M1.5 1h7.5v2.5h-1l-2 6.5h-4.5z" fill="#3f7f5a"/><path d="M4 3.5l2.5-0.3 0.8 4.5-1.3 2.2z" fill="#f4f4f0"/><text x="9.5" y="9.8" font-family="Liberation Serif" font-size="11" font-weight="bold" fill="#7a7a7a">ena</text></svg>
<div class="t" style="left:1326.00px;top:55.53px;width:120px;text-align:center;font-size:10px;line-height:10px;color:#4a4a4a;font-weight:normal;-webkit-text-stroke:0.1px currentColor">Vena</div>
<div class="t" style="left:1326.00px;top:69.03px;width:120px;text-align:center;font-size:10px;line-height:10px;color:#4a4a4a;font-weight:normal;-webkit-text-stroke:0.1px currentColor">365</div>
<svg class="b" style="left:1432px;top:25px;" width="28" height="27" viewBox="0 0 28 27"><path d="M0.9 0.25H26.8V7.15H23.9L19.7 19.65L16.1 25.55H0.9Z" fill="#559970"/><path d="M10.1 8.45L17.6 7.75L19.7 19.65L16.1 24.85Z" fill="#f4f4f0"/></svg>
<div class="t" style="left:1386.00px;top:55.53px;width:120px;text-align:center;font-size:10px;line-height:10px;color:#4a4a4a;font-weight:normal;-webkit-text-stroke:0.1px currentColor">Vena</div>
<div class="b" style="left:0.00px;top:100.00px;width:1600.00px;height:56.00px;background:#e8e8e6"></div>
<div class="b" style="left:0.00px;top:99.50px;width:1600.00px;height:2.00px;background:#d6d6d4"></div>
<div class="b" style="left:2.00px;top:110.00px;width:431.00px;height:21.00px;background:#fff;border:1px solid #dedede;box-sizing:border-box"></div>
<div class="t" style="left:8.00px;top:115.53px;font-size:10px;line-height:10px;color:#444;font-weight:normal;">B4</div>
<svg class="b" style="left:420px;top:117px;" width="8" height="5" viewBox="0 0 8 5"><path d="M0.5 0.5h7l-3.5 4z" fill="#555"/></svg>
<div class="b" style="left:446.00px;top:115.00px;width:1.20px;height:1.50px;background:#b0b0b0"></div>
<div class="b" style="left:446.00px;top:119.00px;width:1.20px;height:1.50px;background:#b0b0b0"></div>
<div class="b" style="left:446.00px;top:123.00px;width:1.20px;height:1.50px;background:#b0b0b0"></div>
<div class="b" style="left:459.00px;top:110.00px;width:91.00px;height:21.00px;background:#fff;border:1px solid #dedede;box-sizing:border-box"></div>
<svg class="b" style="left:469px;top:115px;" width="11" height="11" viewBox="0 0 11 11"><path d="M1 1l9 9M10 1l-9 9" stroke="#c4c4c4" stroke-width="1.2"/></svg>
<svg class="b" style="left:498px;top:115px;" width="13" height="11" viewBox="0 0 13 11"><path d="M1 6l4 4 7-9" stroke="#c4c4c4" stroke-width="1.2" fill="none"/></svg>
<div class="t" style="left:529.00px;top:115.69px;font-size:11px;line-height:11px;color:#555;font-weight:normal;font-family:'Liberation Serif',serif"><i>f</i><span style="font-size:7px">x</span></div>
<div class="b" style="left:553.50px;top:110.00px;width:1046.50px;height:37.50px;background:#fff;border:1px solid #dedede;box-sizing:border-box"></div>
<div class="t" style="left:562.00px;top:115.11px;font-size:10.5px;line-height:10.5px;color:#555;font-weight:normal;">Salaries</div>
<svg class="b" style="left:1586px;top:116px;" width="8" height="6" viewBox="0 0 8 6"><path d="M1 5l3-3 3 3" stroke="#555" fill="none" stroke-width="1.2"/></svg>
<div class="b" style="left:19.00px;top:172.00px;width:1565.50px;height:755.00px;background:#fff"></div>
<div class="b" style="left:0.00px;top:156.00px;width:1584.50px;height:16.00px;background:#e9e9e7"></div>
<div class="b" style="left:79.00px;top:156.00px;width:121.00px;height:16.00px;background:#d6d6d4"></div>
<div class="b" style="left:0.00px;top:172.00px;width:19.00px;height:755.00px;background:#efefed"></div>
<div class="b" style="left:0.00px;top:222.18px;width:19.00px;height:16.73px;background:#d9d9d7"></div>
<svg class="b" style="left:4px;top:158px;" width="13" height="12" viewBox="0 0 13 12"><path d="M12 1v10H1z" fill="#c6c6c4"/></svg>
<div class="b" style="left:19.00px;top:172.00px;width:466.00px;height:16.73px;background:#2d6d48"></div>
<div class="b" style="left:19.00px;top:188.73px;width:466.00px;height:16.73px;background:#c5ebd6"></div>
<div class="b" style="left:19.00px;top:222.18px;width:466.00px;height:16.73px;background:#c5ebd6"></div>
<div class="b" style="left:19.00px;top:255.63px;width:466.00px;height:16.73px;background:#c5ebd6"></div>
<div class="b" style="left:19.00px;top:289.08px;width:466.00px;height:16.73px;background:#c5ebd6"></div>
<div class="b" style="left:19.00px;top:322.53px;width:466.00px;height:16.73px;background:#c5ebd6"></div>
<div class="b" style="left:19.00px;top:355.99px;width:466.00px;height:16.73px;background:#c5ebd6"></div>
<div class="b" style="left:19.00px;top:389.44px;width:466.00px;height:16.73px;background:#c5ebd6"></div>
<div class="b" style="left:19.00px;top:422.89px;width:466.00px;height:16.73px;background:#c5ebd6"></div>
<div class="b" style="left:19.00px;top:456.34px;width:466.00px;height:16.73px;background:#c5ebd6"></div>
<div class="b" style="left:19.00px;top:489.79px;width:466.00px;height:16.73px;background:#c5ebd6"></div>
<div class="b" style="left:19.00px;top:523.25px;width:466.00px;height:16.73px;background:#c5ebd6"></div>
<div class="b" style="left:19.00px;top:556.70px;width:466.00px;height:16.73px;background:#c5ebd6"></div>
<div class="b" style="left:19.00px;top:590.15px;width:466.00px;height:16.73px;background:#c5ebd6"></div>
<div class="b" style="left:19.00px;top:623.60px;width:466.00px;height:16.73px;background:#c5ebd6"></div>
<div class="b" style="left:19.00px;top:657.05px;width:466.00px;height:16.73px;background:#c5ebd6"></div>
<div class="b" style="left:19.00px;top:690.51px;width:466.00px;height:16.73px;background:#c5ebd6"></div>
<div class="b" style="left:19.00px;top:723.96px;width:466.00px;height:16.73px;background:#c5ebd6"></div>
<div class="b" style="left:19.00px;top:757.41px;width:466.00px;height:16.73px;background:#c5ebd6"></div>
<div class="b" style="left:19.00px;top:790.86px;width:466.00px;height:16.73px;background:#c5ebd6"></div>
<div class="b" style="left:19.00px;top:824.31px;width:466.00px;height:16.73px;background:#c5ebd6"></div>
<div class="b" style="left:19.00px;top:857.77px;width:466.00px;height:16.73px;background:#c5ebd6"></div>
<div class="b" style="left:19.00px;top:891.22px;width:466.00px;height:16.73px;background:#c5ebd6"></div>
<div class="b" style="left:19.00px;top:188.23px;width:466.00px;height:1.00px;background:#235c3b"></div>
<div class="b" style="left:485.00px;top:188.23px;width:1099.50px;height:1.00px;background:#dedede"></div>
<div class="b" style="left:0.00px;top:188.23px;width:19.00px;height:1.00px;background:#d4d4d2"></div>
<div class="b" style="left:19.00px;top:204.95px;width:466.00px;height:1.00px;background:#b9dcc8"></div>
<div class="b" style="left:485.00px;top:204.95px;width:1099.50px;height:1.00px;background:#dedede"></div>
<div class="b" style="left:0.00px;top:204.95px;width:19.00px;height:1.00px;background:#d4d4d2"></div>
<div class="b" style="left:19.00px;top:221.68px;width:466.00px;height:1.00px;background:#b9dcc8"></div>
<div class="b" style="left:485.00px;top:221.68px;width:1099.50px;height:1.00px;background:#dedede"></div>
<div class="b" style="left:0.00px;top:221.68px;width:19.00px;height:1.00px;background:#d4d4d2"></div>
<div class="b" style="left:19.00px;top:238.40px;width:466.00px;height:1.00px;background:#b9dcc8"></div>
<div class="b" style="left:485.00px;top:238.40px;width:1099.50px;height:1.00px;background:#dedede"></div>
<div class="b" style="left:0.00px;top:238.40px;width:19.00px;height:1.00px;background:#d4d4d2"></div>
<div class="b" style="left:19.00px;top:255.13px;width:466.00px;height:1.00px;background:#b9dcc8"></div>
<div class="b" style="left:485.00px;top:255.13px;width:1099.50px;height:1.00px;background:#dedede"></div>
<div class="b" style="left:0.00px;top:255.13px;width:19.00px;height:1.00px;background:#d4d4d2"></div>
<div class="b" style="left:19.00px;top:271.86px;width:466.00px;height:1.00px;background:#b9dcc8"></div>
<div class="b" style="left:485.00px;top:271.86px;width:1099.50px;height:1.00px;background:#dedede"></div>
<div class="b" style="left:0.00px;top:271.86px;width:19.00px;height:1.00px;background:#d4d4d2"></div>
<div class="b" style="left:19.00px;top:288.58px;width:466.00px;height:1.00px;background:#b9dcc8"></div>
<div class="b" style="left:485.00px;top:288.58px;width:1099.50px;height:1.00px;background:#dedede"></div>
<div class="b" style="left:0.00px;top:288.58px;width:19.00px;height:1.00px;background:#d4d4d2"></div>
<div class="b" style="left:19.00px;top:305.31px;width:466.00px;height:1.00px;background:#b9dcc8"></div>
<div class="b" style="left:485.00px;top:305.31px;width:1099.50px;height:1.00px;background:#dedede"></div>
<div class="b" style="left:0.00px;top:305.31px;width:19.00px;height:1.00px;background:#d4d4d2"></div>
<div class="b" style="left:19.00px;top:322.03px;width:466.00px;height:1.00px;background:#b9dcc8"></div>
<div class="b" style="left:485.00px;top:322.03px;width:1099.50px;height:1.00px;background:#dedede"></div>
<div class="b" style="left:0.00px;top:322.03px;width:19.00px;height:1.00px;background:#d4d4d2"></div>
<div class="b" style="left:19.00px;top:338.76px;width:466.00px;height:1.00px;background:#b9dcc8"></div>
<div class="b" style="left:485.00px;top:338.76px;width:1099.50px;height:1.00px;background:#dedede"></div>
<div class="b" style="left:0.00px;top:338.76px;width:19.00px;height:1.00px;background:#d4d4d2"></div>
<div class="b" style="left:19.00px;top:355.49px;width:466.00px;height:1.00px;background:#b9dcc8"></div>
<div class="b" style="left:485.00px;top:355.49px;width:1099.50px;height:1.00px;background:#dedede"></div>
<div class="b" style="left:0.00px;top:355.49px;width:19.00px;height:1.00px;background:#d4d4d2"></div>
<div class="b" style="left:19.00px;top:372.21px;width:466.00px;height:1.00px;background:#b9dcc8"></div>
<div class="b" style="left:485.00px;top:372.21px;width:1099.50px;height:1.00px;background:#dedede"></div>
<div class="b" style="left:0.00px;top:372.21px;width:19.00px;height:1.00px;background:#d4d4d2"></div>
<div class="b" style="left:19.00px;top:388.94px;width:466.00px;height:1.00px;background:#b9dcc8"></div>
<div class="b" style="left:485.00px;top:388.94px;width:1099.50px;height:1.00px;background:#dedede"></div>
<div class="b" style="left:0.00px;top:388.94px;width:19.00px;height:1.00px;background:#d4d4d2"></div>
<div class="b" style="left:19.00px;top:405.66px;width:466.00px;height:1.00px;background:#b9dcc8"></div>
<div class="b" style="left:485.00px;top:405.66px;width:1099.50px;height:1.00px;background:#dedede"></div>
<div class="b" style="left:0.00px;top:405.66px;width:19.00px;height:1.00px;background:#d4d4d2"></div>
<div class="b" style="left:19.00px;top:422.39px;width:466.00px;height:1.00px;background:#b9dcc8"></div>
<div class="b" style="left:485.00px;top:422.39px;width:1099.50px;height:1.00px;background:#dedede"></div>
<div class="b" style="left:0.00px;top:422.39px;width:19.00px;height:1.00px;background:#d4d4d2"></div>
<div class="b" style="left:19.00px;top:439.12px;width:466.00px;height:1.00px;background:#b9dcc8"></div>
<div class="b" style="left:485.00px;top:439.12px;width:1099.50px;height:1.00px;background:#dedede"></div>
<div class="b" style="left:0.00px;top:439.12px;width:19.00px;height:1.00px;background:#d4d4d2"></div>
<div class="b" style="left:19.00px;top:455.84px;width:466.00px;height:1.00px;background:#b9dcc8"></div>
<div class="b" style="left:485.00px;top:455.84px;width:1099.50px;height:1.00px;background:#dedede"></div>
<div class="b" style="left:0.00px;top:455.84px;width:19.00px;height:1.00px;background:#d4d4d2"></div>
<div class="b" style="left:19.00px;top:472.57px;width:466.00px;height:1.00px;background:#b9dcc8"></div>
<div class="b" style="left:485.00px;top:472.57px;width:1099.50px;height:1.00px;background:#dedede"></div>
<div class="b" style="left:0.00px;top:472.57px;width:19.00px;height:1.00px;background:#d4d4d2"></div>
<div class="b" style="left:19.00px;top:489.29px;width:466.00px;height:1.00px;background:#b9dcc8"></div>
<div class="b" style="left:485.00px;top:489.29px;width:1099.50px;height:1.00px;background:#dedede"></div>
<div class="b" style="left:0.00px;top:489.29px;width:19.00px;height:1.00px;background:#d4d4d2"></div>
<div class="b" style="left:19.00px;top:506.02px;width:466.00px;height:1.00px;background:#b9dcc8"></div>
<div class="b" style="left:485.00px;top:506.02px;width:1099.50px;height:1.00px;background:#dedede"></div>
<div class="b" style="left:0.00px;top:506.02px;width:19.00px;height:1.00px;background:#d4d4d2"></div>
<div class="b" style="left:19.00px;top:522.75px;width:466.00px;height:1.00px;background:#b9dcc8"></div>
<div class="b" style="left:485.00px;top:522.75px;width:1099.50px;height:1.00px;background:#dedede"></div>
<div class="b" style="left:0.00px;top:522.75px;width:19.00px;height:1.00px;background:#d4d4d2"></div>
<div class="b" style="left:19.00px;top:539.47px;width:466.00px;height:1.00px;background:#b9dcc8"></div>
<div class="b" style="left:485.00px;top:539.47px;width:1099.50px;height:1.00px;background:#dedede"></div>
<div class="b" style="left:0.00px;top:539.47px;width:19.00px;height:1.00px;background:#d4d4d2"></div>
<div class="b" style="left:19.00px;top:556.20px;width:466.00px;height:1.00px;background:#b9dcc8"></div>
<div class="b" style="left:485.00px;top:556.20px;width:1099.50px;height:1.00px;background:#dedede"></div>
<div class="b" style="left:0.00px;top:556.20px;width:19.00px;height:1.00px;background:#d4d4d2"></div>
<div class="b" style="left:19.00px;top:572.92px;width:466.00px;height:1.00px;background:#b9dcc8"></div>
<div class="b" style="left:485.00px;top:572.92px;width:1099.50px;height:1.00px;background:#dedede"></div>
<div class="b" style="left:0.00px;top:572.92px;width:19.00px;height:1.00px;background:#d4d4d2"></div>
<div class="b" style="left:19.00px;top:589.65px;width:466.00px;height:1.00px;background:#b9dcc8"></div>
<div class="b" style="left:485.00px;top:589.65px;width:1099.50px;height:1.00px;background:#dedede"></div>
<div class="b" style="left:0.00px;top:589.65px;width:19.00px;height:1.00px;background:#d4d4d2"></div>
<div class="b" style="left:19.00px;top:606.38px;width:466.00px;height:1.00px;background:#b9dcc8"></div>
<div class="b" style="left:485.00px;top:606.38px;width:1099.50px;height:1.00px;background:#dedede"></div>
<div class="b" style="left:0.00px;top:606.38px;width:19.00px;height:1.00px;background:#d4d4d2"></div>
<div class="b" style="left:19.00px;top:623.10px;width:466.00px;height:1.00px;background:#b9dcc8"></div>
<div class="b" style="left:485.00px;top:623.10px;width:1099.50px;height:1.00px;background:#dedede"></div>
<div class="b" style="left:0.00px;top:623.10px;width:19.00px;height:1.00px;background:#d4d4d2"></div>
<div class="b" style="left:19.00px;top:639.83px;width:466.00px;height:1.00px;background:#b9dcc8"></div>
<div class="b" style="left:485.00px;top:639.83px;width:1099.50px;height:1.00px;background:#dedede"></div>
<div class="b" style="left:0.00px;top:639.83px;width:19.00px;height:1.00px;background:#d4d4d2"></div>
<div class="b" style="left:19.00px;top:656.55px;width:466.00px;height:1.00px;background:#b9dcc8"></div>
<div class="b" style="left:485.00px;top:656.55px;width:1099.50px;height:1.00px;background:#dedede"></div>
<div class="b" style="left:0.00px;top:656.55px;width:19.00px;height:1.00px;background:#d4d4d2"></div>
<div class="b" style="left:19.00px;top:673.28px;width:466.00px;height:1.00px;background:#b9dcc8"></div>
<div class="b" style="left:485.00px;top:673.28px;width:1099.50px;height:1.00px;background:#dedede"></div>
<div class="b" style="left:0.00px;top:673.28px;width:19.00px;height:1.00px;background:#d4d4d2"></div>
<div class="b" style="left:19.00px;top:690.01px;width:466.00px;height:1.00px;background:#b9dcc8"></div>
<div class="b" style="left:485.00px;top:690.01px;width:1099.50px;height:1.00px;background:#dedede"></div>
<div class="b" style="left:0.00px;top:690.01px;width:19.00px;height:1.00px;background:#d4d4d2"></div>
<div class="b" style="left:19.00px;top:706.73px;width:466.00px;height:1.00px;background:#b9dcc8"></div>
<div class="b" style="left:485.00px;top:706.73px;width:1099.50px;height:1.00px;background:#dedede"></div>
<div class="b" style="left:0.00px;top:706.73px;width:19.00px;height:1.00px;background:#d4d4d2"></div>
<div class="b" style="left:19.00px;top:723.46px;width:466.00px;height:1.00px;background:#b9dcc8"></div>
<div class="b" style="left:485.00px;top:723.46px;width:1099.50px;height:1.00px;background:#dedede"></div>
<div class="b" style="left:0.00px;top:723.46px;width:19.00px;height:1.00px;background:#d4d4d2"></div>
<div class="b" style="left:19.00px;top:740.18px;width:466.00px;height:1.00px;background:#b9dcc8"></div>
<div class="b" style="left:485.00px;top:740.18px;width:1099.50px;height:1.00px;background:#dedede"></div>
<div class="b" style="left:0.00px;top:740.18px;width:19.00px;height:1.00px;background:#d4d4d2"></div>
<div class="b" style="left:19.00px;top:756.91px;width:466.00px;height:1.00px;background:#b9dcc8"></div>
<div class="b" style="left:485.00px;top:756.91px;width:1099.50px;height:1.00px;background:#dedede"></div>
<div class="b" style="left:0.00px;top:756.91px;width:19.00px;height:1.00px;background:#d4d4d2"></div>
<div class="b" style="left:19.00px;top:773.64px;width:466.00px;height:1.00px;background:#b9dcc8"></div>
<div class="b" style="left:485.00px;top:773.64px;width:1099.50px;height:1.00px;background:#dedede"></div>
<div class="b" style="left:0.00px;top:773.64px;width:19.00px;height:1.00px;background:#d4d4d2"></div>
<div class="b" style="left:19.00px;top:790.36px;width:466.00px;height:1.00px;background:#b9dcc8"></div>
<div class="b" style="left:485.00px;top:790.36px;width:1099.50px;height:1.00px;background:#dedede"></div>
<div class="b" style="left:0.00px;top:790.36px;width:19.00px;height:1.00px;background:#d4d4d2"></div>
<div class="b" style="left:19.00px;top:807.09px;width:466.00px;height:1.00px;background:#b9dcc8"></div>
<div class="b" style="left:485.00px;top:807.09px;width:1099.50px;height:1.00px;background:#dedede"></div>
<div class="b" style="left:0.00px;top:807.09px;width:19.00px;height:1.00px;background:#d4d4d2"></div>
<div class="b" style="left:19.00px;top:823.81px;width:466.00px;height:1.00px;background:#b9dcc8"></div>
<div class="b" style="left:485.00px;top:823.81px;width:1099.50px;height:1.00px;background:#dedede"></div>
<div class="b" style="left:0.00px;top:823.81px;width:19.00px;height:1.00px;background:#d4d4d2"></div>
<div class="b" style="left:19.00px;top:840.54px;width:466.00px;height:1.00px;background:#b9dcc8"></div>
<div class="b" style="left:485.00px;top:840.54px;width:1099.50px;height:1.00px;background:#dedede"></div>
<div class="b" style="left:0.00px;top:840.54px;width:19.00px;height:1.00px;background:#d4d4d2"></div>
<div class="b" style="left:19.00px;top:857.27px;width:466.00px;height:1.00px;background:#b9dcc8"></div>
<div class="b" style="left:485.00px;top:857.27px;width:1099.50px;height:1.00px;background:#dedede"></div>
<div class="b" style="left:0.00px;top:857.27px;width:19.00px;height:1.00px;background:#d4d4d2"></div>
<div class="b" style="left:19.00px;top:873.99px;width:466.00px;height:1.00px;background:#b9dcc8"></div>
<div class="b" style="left:485.00px;top:873.99px;width:1099.50px;height:1.00px;background:#dedede"></div>
<div class="b" style="left:0.00px;top:873.99px;width:19.00px;height:1.00px;background:#d4d4d2"></div>
<div class="b" style="left:19.00px;top:890.72px;width:466.00px;height:1.00px;background:#b9dcc8"></div>
<div class="b" style="left:485.00px;top:890.72px;width:1099.50px;height:1.00px;background:#dedede"></div>
<div class="b" style="left:0.00px;top:890.72px;width:19.00px;height:1.00px;background:#d4d4d2"></div>
<div class="b" style="left:19.00px;top:907.44px;width:466.00px;height:1.00px;background:#b9dcc8"></div>
<div class="b" style="left:485.00px;top:907.44px;width:1099.50px;height:1.00px;background:#dedede"></div>
<div class="b" style="left:0.00px;top:907.44px;width:19.00px;height:1.00px;background:#d4d4d2"></div>
<div class="b" style="left:19.00px;top:924.17px;width:466.00px;height:1.00px;background:#b9dcc8"></div>
<div class="b" style="left:485.00px;top:924.17px;width:1099.50px;height:1.00px;background:#dedede"></div>
<div class="b" style="left:0.00px;top:924.17px;width:19.00px;height:1.00px;background:#d4d4d2"></div>
<div class="b" style="left:18.50px;top:156.00px;width:1.00px;height:16.00px;background:#d0d0ce"></div>
<div class="b" style="left:18.50px;top:172.00px;width:1.00px;height:755.00px;background:#d6d6d6"></div>
<div class="b" style="left:78.50px;top:156.00px;width:1.00px;height:16.00px;background:#d0d0ce"></div>
<div class="b" style="left:78.50px;top:188.73px;width:1.00px;height:735.94px;background:rgba(40,80,60,0.10)"></div>
<div class="b" style="left:199.50px;top:156.00px;width:1.00px;height:16.00px;background:#d0d0ce"></div>
<div class="b" style="left:199.50px;top:188.73px;width:1.00px;height:735.94px;background:rgba(40,80,60,0.10)"></div>
<div class="b" style="left:260.50px;top:156.00px;width:1.00px;height:16.00px;background:#d0d0ce"></div>
<div class="b" style="left:260.50px;top:188.73px;width:1.00px;height:735.94px;background:rgba(40,80,60,0.10)"></div>
<div class="b" style="left:342.50px;top:156.00px;width:1.00px;height:16.00px;background:#d0d0ce"></div>
<div class="b" style="left:342.50px;top:188.73px;width:1.00px;height:735.94px;background:rgba(40,80,60,0.10)"></div>
<div class="b" style="left:383.50px;top:156.00px;width:1.00px;height:16.00px;background:#d0d0ce"></div>
<div class="b" style="left:383.50px;top:188.73px;width:1.00px;height:735.94px;background:rgba(40,80,60,0.10)"></div>
<div class="b" style="left:436.50px;top:156.00px;width:1.00px;height:16.00px;background:#d0d0ce"></div>
<div class="b" style="left:436.50px;top:188.73px;width:1.00px;height:735.94px;background:rgba(40,80,60,0.10)"></div>
<div class="b" style="left:484.50px;top:156.00px;width:1.00px;height:16.00px;background:#d0d0ce"></div>
<div class="b" style="left:484.50px;top:172.00px;width:1.00px;height:755.00px;background:#d6d6d6"></div>
<div class="b" style="left:538.00px;top:156.00px;width:1.00px;height:16.00px;background:#d0d0ce"></div>
<div class="b" style="left:538.00px;top:172.00px;width:1.00px;height:755.00px;background:#d6d6d6"></div>
<div class="b" style="left:591.50px;top:156.00px;width:1.00px;height:16.00px;background:#d0d0ce"></div>
<div class="b" style="left:591.50px;top:172.00px;width:1.00px;height:755.00px;background:#d6d6d6"></div>
<div class="b" style="left:645.00px;top:156.00px;width:1.00px;height:16.00px;background:#d0d0ce"></div>
<div class="b" style="left:645.00px;top:172.00px;width:1.00px;height:755.00px;background:#d6d6d6"></div>
<div class="b" style="left:698.50px;top:156.00px;width:1.00px;height:16.00px;background:#d0d0ce"></div>
<div class="b" style="left:698.50px;top:172.00px;width:1.00px;height:755.00px;background:#d6d6d6"></div>
<div class="b" style="left:752.00px;top:156.00px;width:1.00px;height:16.00px;background:#d0d0ce"></div>
<div class="b" style="left:752.00px;top:172.00px;width:1.00px;height:755.00px;background:#d6d6d6"></div>
<div class="b" style="left:805.50px;top:156.00px;width:1.00px;height:16.00px;background:#d0d0ce"></div>
<div class="b" style="left:805.50px;top:172.00px;width:1.00px;height:755.00px;background:#d6d6d6"></div>
<div class="b" style="left:859.00px;top:156.00px;width:1.00px;height:16.00px;background:#d0d0ce"></div>
<div class="b" style="left:859.00px;top:172.00px;width:1.00px;height:755.00px;background:#d6d6d6"></div>
<div class="b" style="left:912.50px;top:156.00px;width:1.00px;height:16.00px;background:#d0d0ce"></div>
<div class="b" style="left:912.50px;top:172.00px;width:1.00px;height:755.00px;background:#d6d6d6"></div>
<div class="b" style="left:966.00px;top:156.00px;width:1.00px;height:16.00px;background:#d0d0ce"></div>
<div class="b" style="left:966.00px;top:172.00px;width:1.00px;height:755.00px;background:#d6d6d6"></div>
<div class="b" style="left:1019.50px;top:156.00px;width:1.00px;height:16.00px;background:#d0d0ce"></div>
<div class="b" style="left:1019.50px;top:172.00px;width:1.00px;height:755.00px;background:#d6d6d6"></div>
<div class="b" style="left:1073.00px;top:156.00px;width:1.00px;height:16.00px;background:#d0d0ce"></div>
<div class="b" style="left:1073.00px;top:172.00px;width:1.00px;height:755.00px;background:#d6d6d6"></div>
<div class="b" style="left:1126.50px;top:156.00px;width:1.00px;height:16.00px;background:#d0d0ce"></div>
<div class="b" style="left:1126.50px;top:172.00px;width:1.00px;height:755.00px;background:#d6d6d6"></div>
<div class="b" style="left:1180.00px;top:156.00px;width:1.00px;height:16.00px;background:#d0d0ce"></div>
<div class="b" style="left:1180.00px;top:172.00px;width:1.00px;height:755.00px;background:#d6d6d6"></div>
<div class="b" style="left:1233.50px;top:156.00px;width:1.00px;height:16.00px;background:#d0d0ce"></div>
<div class="b" style="left:1233.50px;top:172.00px;width:1.00px;height:755.00px;background:#d6d6d6"></div>
<div class="b" style="left:1287.00px;top:156.00px;width:1.00px;height:16.00px;background:#d0d0ce"></div>
<div class="b" style="left:1287.00px;top:172.00px;width:1.00px;height:755.00px;background:#d6d6d6"></div>
<div class="b" style="left:1340.50px;top:156.00px;width:1.00px;height:16.00px;background:#d0d0ce"></div>
<div class="b" style="left:1340.50px;top:172.00px;width:1.00px;height:755.00px;background:#d6d6d6"></div>
<div class="b" style="left:1394.00px;top:156.00px;width:1.00px;height:16.00px;background:#d0d0ce"></div>
<div class="b" style="left:1394.00px;top:172.00px;width:1.00px;height:755.00px;background:#d6d6d6"></div>
<div class="b" style="left:1447.50px;top:156.00px;width:1.00px;height:16.00px;background:#d0d0ce"></div>
<div class="b" style="left:1447.50px;top:172.00px;width:1.00px;height:755.00px;background:#d6d6d6"></div>
<div class="b" style="left:1501.00px;top:156.00px;width:1.00px;height:16.00px;background:#d0d0ce"></div>
<div class="b" style="left:1501.00px;top:172.00px;width:1.00px;height:755.00px;background:#d6d6d6"></div>
<div class="b" style="left:1554.50px;top:156.00px;width:1.00px;height:16.00px;background:#d0d0ce"></div>
<div class="b" style="left:1554.50px;top:172.00px;width:1.00px;height:755.00px;background:#d6d6d6"></div>
<div class="b" style="left:0.00px;top:171.50px;width:1584.50px;height:1.00px;background:#c8c8c6"></div>
<div class="b" style="left:1583.50px;top:156.00px;width:1.50px;height:771.00px;background:#a8a8a8"></div>
<div class="b" style="left:0.00px;top:926.00px;width:1584.50px;height:1.50px;background:#c8c8c6"></div>
<div class="t" style="left:19.00px;top:160.11px;width:60px;text-align:center;font-size:10.5px;line-height:10.5px;color:#3c3c3c;font-weight:normal;-webkit-text-stroke:0.15px currentColor">A</div>
<div class="t" style="left:109.50px;top:160.11px;width:60px;text-align:center;font-size:10.5px;line-height:10.5px;color:#3c3c3c;font-weight:normal;-webkit-text-stroke:0.15px currentColor">B</div>
<div class="t" style="left:200.50px;top:160.11px;width:60px;text-align:center;font-size:10.5px;line-height:10.5px;color:#3c3c3c;font-weight:normal;-webkit-text-stroke:0.15px currentColor">C</div>
<div class="t" style="left:272.00px;top:160.11px;width:60px;text-align:center;font-size:10.5px;line-height:10.5px;color:#3c3c3c;font-weight:normal;-webkit-text-stroke:0.15px currentColor">D</div>
<div class="t" style="left:333.50px;top:160.11px;width:60px;text-align:center;font-size:10.5px;line-height:10.5px;color:#3c3c3c;font-weight:normal;-webkit-text-stroke:0.15px currentColor">E</div>
<div class="t" style="left:380.50px;top:160.11px;width:60px;text-align:center;font-size:10.5px;line-height:10.5px;color:#3c3c3c;font-weight:normal;-webkit-text-stroke:0.15px currentColor">F</div>
<div class="t" style="left:431.00px;top:160.11px;width:60px;text-align:center;font-size:10.5px;line-height:10.5px;color:#3c3c3c;font-weight:normal;-webkit-text-stroke:0.15px currentColor">G</div>
<div class="t" style="left:481.75px;top:160.11px;width:60px;text-align:center;font-size:10.5px;line-height:10.5px;color:#3c3c3c;font-weight:normal;-webkit-text-stroke:0.15px currentColor">H</div>
<div class="t" style="left:535.25px;top:160.11px;width:60px;text-align:center;font-size:10.5px;line-height:10.5px;color:#3c3c3c;font-weight:normal;-webkit-text-stroke:0.15px currentColor">I</div>
<div class="t" style="left:588.75px;top:160.11px;width:60px;text-align:center;font-size:10.5px;line-height:10.5px;color:#3c3c3c;font-weight:normal;-webkit-text-stroke:0.15px currentColor">J</div>
<div class="t" style="left:642.25px;top:160.11px;width:60px;text-align:center;font-size:10.5px;line-height:10.5px;color:#3c3c3c;font-weight:normal;-webkit-text-stroke:0.15px currentColor">K</div>
<div class="t" style="left:695.75px;top:160.11px;width:60px;text-align:center;font-size:10.5px;line-height:10.5px;color:#3c3c3c;font-weight:normal;-webkit-text-stroke:0.15px currentColor">L</div>
<div class="t" style="left:749.25px;top:160.11px;width:60px;text-align:center;font-size:10.5px;line-height:10.5px;color:#3c3c3c;font-weight:normal;-webkit-text-stroke:0.15px currentColor">M</div>
<div class="t" style="left:802.75px;top:160.11px;width:60px;text-align:center;font-size:10.5px;line-height:10.5px;color:#3c3c3c;font-weight:normal;-webkit-text-stroke:0.15px currentColor">N</div>
<div class="t" style="left:856.25px;top:160.11px;width:60px;text-align:center;font-size:10.5px;line-height:10.5px;color:#3c3c3c;font-weight:normal;-webkit-text-stroke:0.15px currentColor">O</div>
<div class="t" style="left:909.75px;top:160.11px;width:60px;text-align:center;font-size:10.5px;line-height:10.5px;color:#3c3c3c;font-weight:normal;-webkit-text-stroke:0.15px currentColor">P</div>
<div class="t" style="left:963.25px;top:160.11px;width:60px;text-align:center;font-size:10.5px;line-height:10.5px;color:#3c3c3c;font-weight:normal;-webkit-text-stroke:0.15px currentColor">Q</div>
<div class="t" style="left:1016.75px;top:160.11px;width:60px;text-align:center;font-size:10.5px;line-height:10.5px;color:#3c3c3c;font-weight:normal;-webkit-text-stroke:0.15px currentColor">R</div>
<div class="t" style="left:1070.25px;top:160.11px;width:60px;text-align:center;font-size:10.5px;line-height:10.5px;color:#3c3c3c;font-weight:normal;-webkit-text-stroke:0.15px currentColor">S</div>
<div class="t" style="left:1123.75px;top:160.11px;width:60px;text-align:center;font-size:10.5px;line-height:10.5px;color:#3c3c3c;font-weight:normal;-webkit-text-stroke:0.15px currentColor">T</div>
<div class="t" style="left:1177.25px;top:160.11px;width:60px;text-align:center;font-size:10.5px;line-height:10.5px;color:#3c3c3c;font-weight:normal;-webkit-text-stroke:0.15px currentColor">U</div>
<div class="t" style="left:1230.75px;top:160.11px;width:60px;text-align:center;font-size:10.5px;line-height:10.5px;color:#3c3c3c;font-weight:normal;-webkit-text-stroke:0.15px currentColor">V</div>
<div class="t" style="left:1284.25px;top:160.11px;width:60px;text-align:center;font-size:10.5px;line-height:10.5px;color:#3c3c3c;font-weight:normal;-webkit-text-stroke:0.15px currentColor">W</div>
<div class="t" style="left:1337.75px;top:160.11px;width:60px;text-align:center;font-size:10.5px;line-height:10.5px;color:#3c3c3c;font-weight:normal;-webkit-text-stroke:0.15px currentColor">X</div>
<div class="t" style="left:1391.25px;top:160.11px;width:60px;text-align:center;font-size:10.5px;line-height:10.5px;color:#3c3c3c;font-weight:normal;-webkit-text-stroke:0.15px currentColor">Y</div>
<div class="t" style="left:1444.75px;top:160.11px;width:60px;text-align:center;font-size:10.5px;line-height:10.5px;color:#3c3c3c;font-weight:normal;-webkit-text-stroke:0.15px currentColor">Z</div>
<div class="t" style="left:1498.25px;top:160.11px;width:60px;text-align:center;font-size:10.5px;line-height:10.5px;color:#3c3c3c;font-weight:normal;-webkit-text-stroke:0.15px currentColor">AA</div>
<div class="t" style="left:1551.75px;top:160.11px;width:60px;text-align:center;font-size:10.5px;line-height:10.5px;color:#3c3c3c;font-weight:normal;-webkit-text-stroke:0.15px currentColor">AB</div>
<div class="t" style="left:-1.50px;top:176.96px;width:20px;text-align:center;font-size:9.5px;line-height:9.5px;color:#333;font-weight:normal;-webkit-text-stroke:0.3px currentColor">1</div>
<div class="t" style="left:-1.50px;top:193.68px;width:20px;text-align:center;font-size:9.5px;line-height:9.5px;color:#333;font-weight:normal;-webkit-text-stroke:0.3px currentColor">2</div>
<div class="t" style="left:-1.50px;top:210.41px;width:20px;text-align:center;font-size:9.5px;line-height:9.5px;color:#333;font-weight:normal;-webkit-text-stroke:0.3px currentColor">3</div>
<div class="t" style="left:-1.50px;top:227.14px;width:20px;text-align:center;font-size:9.5px;line-height:9.5px;color:#3d5f4b;font-weight:normal;-webkit-text-stroke:0.3px currentColor">4</div>
<div class="t" style="left:-1.50px;top:243.86px;width:20px;text-align:center;font-size:9.5px;line-height:9.5px;color:#333;font-weight:normal;-webkit-text-stroke:0.3px currentColor">5</div>
<div class="t" style="left:-1.50px;top:260.59px;width:20px;text-align:center;font-size:9.5px;line-height:9.5px;color:#333;font-weight:normal;-webkit-text-stroke:0.3px currentColor">6</div>
<div class="t" style="left:-1.50px;top:277.31px;width:20px;text-align:center;font-size:9.5px;line-height:9.5px;color:#333;font-weight:normal;-webkit-text-stroke:0.3px currentColor">7</div>
<div class="t" style="left:-1.50px;top:294.04px;width:20px;text-align:center;font-size:9.5px;line-height:9.5px;color:#333;font-weight:normal;-webkit-text-stroke:0.3px currentColor">8</div>
<div class="t" style="left:-1.50px;top:310.77px;width:20px;text-align:center;font-size:9.5px;line-height:9.5px;color:#333;font-weight:normal;-webkit-text-stroke:0.3px currentColor">9</div>
<div class="t" style="left:-1.50px;top:327.49px;width:20px;text-align:center;font-size:9.5px;line-height:9.5px;color:#333;font-weight:normal;-webkit-text-stroke:0.3px currentColor">10</div>
<div class="t" style="left:-1.50px;top:344.22px;width:20px;text-align:center;font-size:9.5px;line-height:9.5px;color:#333;font-weight:normal;-webkit-text-stroke:0.3px currentColor">11</div>
<div class="t" style="left:-1.50px;top:360.94px;width:20px;text-align:center;font-size:9.5px;line-height:9.5px;color:#333;font-weight:normal;-webkit-text-stroke:0.3px currentColor">12</div>
<div class="t" style="left:-1.50px;top:377.67px;width:20px;text-align:center;font-size:9.5px;line-height:9.5px;color:#333;font-weight:normal;-webkit-text-stroke:0.3px currentColor">13</div>
<div class="t" style="left:-1.50px;top:394.40px;width:20px;text-align:center;font-size:9.5px;line-height:9.5px;color:#333;font-weight:normal;-webkit-text-stroke:0.3px currentColor">14</div>
<div class="t" style="left:-1.50px;top:411.12px;width:20px;text-align:center;font-size:9.5px;line-height:9.5px;color:#333;font-weight:normal;-webkit-text-stroke:0.3px currentColor">15</div>
<div class="t" style="left:-1.50px;top:427.85px;width:20px;text-align:center;font-size:9.5px;line-height:9.5px;color:#333;font-weight:normal;-webkit-text-stroke:0.3px currentColor">16</div>
<div class="t" style="left:-1.50px;top:444.57px;width:20px;text-align:center;font-size:9.5px;line-height:9.5px;color:#333;font-weight:normal;-webkit-text-stroke:0.3px currentColor">17</div>
<div class="t" style="left:-1.50px;top:461.30px;width:20px;text-align:center;font-size:9.5px;line-height:9.5px;color:#333;font-weight:normal;-webkit-text-stroke:0.3px currentColor">18</div>
<div class="t" style="left:-1.50px;top:478.03px;width:20px;text-align:center;font-size:9.5px;line-height:9.5px;color:#333;font-weight:normal;-webkit-text-stroke:0.3px currentColor">19</div>
<div class="t" style="left:-1.50px;top:494.75px;width:20px;text-align:center;font-size:9.5px;line-height:9.5px;color:#333;font-weight:normal;-webkit-text-stroke:0.3px currentColor">20</div>
<div class="t" style="left:-1.50px;top:511.48px;width:20px;text-align:center;font-size:9.5px;line-height:9.5px;color:#333;font-weight:normal;-webkit-text-stroke:0.3px currentColor">21</div>
<div class="t" style="left:-1.50px;top:528.20px;width:20px;text-align:center;font-size:9.5px;line-height:9.5px;color:#333;font-weight:normal;-webkit-text-stroke:0.3px currentColor">22</div>
<div class="t" style="left:-1.50px;top:544.93px;width:20px;text-align:center;font-size:9.5px;line-height:9.5px;color:#333;font-weight:normal;-webkit-text-stroke:0.3px currentColor">23</div>
<div class="t" style="left:-1.50px;top:561.66px;width:20px;text-align:center;font-size:9.5px;line-height:9.5px;color:#333;font-weight:normal;-webkit-text-stroke:0.3px currentColor">24</div>
<div class="t" style="left:-1.50px;top:578.38px;width:20px;text-align:center;font-size:9.5px;line-height:9.5px;color:#333;font-weight:normal;-webkit-text-stroke:0.3px currentColor">25</div>
<div class="t" style="left:-1.50px;top:595.11px;width:20px;text-align:center;font-size:9.5px;line-height:9.5px;color:#333;font-weight:normal;-webkit-text-stroke:0.3px currentColor">26</div>
<div class="t" style="left:-1.50px;top:611.83px;width:20px;text-align:center;font-size:9.5px;line-height:9.5px;color:#333;font-weight:normal;-webkit-text-stroke:0.3px currentColor">27</div>
<div class="t" style="left:-1.50px;top:628.56px;width:20px;text-align:center;font-size:9.5px;line-height:9.5px;color:#333;font-weight:normal;-webkit-text-stroke:0.3px currentColor">28</div>
<div class="t" style="left:-1.50px;top:645.29px;width:20px;text-align:center;font-size:9.5px;line-height:9.5px;color:#333;font-weight:normal;-webkit-text-stroke:0.3px currentColor">29</div>
<div class="t" style="left:-1.50px;top:662.01px;width:20px;text-align:center;font-size:9.5px;line-height:9.5px;color:#333;font-weight:normal;-webkit-text-stroke:0.3px currentColor">30</div>
<div class="t" style="left:-1.50px;top:678.74px;width:20px;text-align:center;font-size:9.5px;line-height:9.5px;color:#333;font-weight:normal;-webkit-text-stroke:0.3px currentColor">31</div>
<div class="t" style="left:-1.50px;top:695.46px;width:20px;text-align:center;font-size:9.5px;line-height:9.5px;color:#333;font-weight:normal;-webkit-text-stroke:0.3px currentColor">32</div>
<div class="t" style="left:-1.50px;top:712.19px;width:20px;text-align:center;font-size:9.5px;line-height:9.5px;color:#333;font-weight:normal;-webkit-text-stroke:0.3px currentColor">33</div>
<div class="t" style="left:-1.50px;top:728.92px;width:20px;text-align:center;font-size:9.5px;line-height:9.5px;color:#333;font-weight:normal;-webkit-text-stroke:0.3px currentColor">34</div>
<div class="t" style="left:-1.50px;top:745.64px;width:20px;text-align:center;font-size:9.5px;line-height:9.5px;color:#333;font-weight:normal;-webkit-text-stroke:0.3px currentColor">35</div>
<div class="t" style="left:-1.50px;top:762.37px;width:20px;text-align:center;font-size:9.5px;line-height:9.5px;color:#333;font-weight:normal;-webkit-text-stroke:0.3px currentColor">36</div>
<div class="t" style="left:-1.50px;top:779.09px;width:20px;text-align:center;font-size:9.5px;line-height:9.5px;color:#333;font-weight:normal;-webkit-text-stroke:0.3px currentColor">37</div>
<div class="t" style="left:-1.50px;top:795.82px;width:20px;text-align:center;font-size:9.5px;line-height:9.5px;color:#333;font-weight:normal;-webkit-text-stroke:0.3px currentColor">38</div>
<div class="t" style="left:-1.50px;top:812.55px;width:20px;text-align:center;font-size:9.5px;line-height:9.5px;color:#333;font-weight:normal;-webkit-text-stroke:0.3px currentColor">39</div>
<div class="t" style="left:-1.50px;top:829.27px;width:20px;text-align:center;font-size:9.5px;line-height:9.5px;color:#333;font-weight:normal;-webkit-text-stroke:0.3px currentColor">40</div>
<div class="t" style="left:-1.50px;top:846.00px;width:20px;text-align:center;font-size:9.5px;line-height:9.5px;color:#333;font-weight:normal;-webkit-text-stroke:0.3px currentColor">41</div>
<div class="t" style="left:-1.50px;top:862.72px;width:20px;text-align:center;font-size:9.5px;line-height:9.5px;color:#333;font-weight:normal;-webkit-text-stroke:0.3px currentColor">42</div>
<div class="t" style="left:-1.50px;top:879.45px;width:20px;text-align:center;font-size:9.5px;line-height:9.5px;color:#333;font-weight:normal;-webkit-text-stroke:0.3px currentColor">43</div>
<div class="t" style="left:-1.50px;top:896.18px;width:20px;text-align:center;font-size:9.5px;line-height:9.5px;color:#333;font-weight:normal;-webkit-text-stroke:0.3px currentColor">44</div>
<div class="t" style="left:-1.50px;top:912.90px;width:20px;text-align:center;font-size:9.5px;line-height:9.5px;color:#333;font-weight:normal;-webkit-text-stroke:0.3px currentColor">45</div>
<div class="t" style="left:20.50px;top:176.11px;font-size:10.5px;line-height:10.5px;color:#fff;font-weight:bold;letter-spacing:0px">Account</div>
<div class="b" style="left:65.00px;top:173.50px;width:13.00px;height:13.50px;background:#fff;border:1px solid #dcdcdc;box-sizing:border-box"></div>
<svg class="b" style="left:69px;top:178px;" width="6" height="4" viewBox="0 0 6 4"><path d="M0 0h6L3 3.5z" fill="#555"/></svg>
<div class="t" style="left:80.50px;top:176.11px;font-size:10.5px;line-height:10.5px;color:#fff;font-weight:bold;letter-spacing:0.05px">Account Name</div>
<div class="b" style="left:186.00px;top:173.50px;width:13.00px;height:13.50px;background:#fff;border:1px solid #dcdcdc;box-sizing:border-box"></div>
<svg class="b" style="left:190px;top:178px;" width="6" height="4" viewBox="0 0 6 4"><path d="M0 0h6L3 3.5z" fill="#555"/></svg>
<div class="t" style="left:201.50px;top:176.11px;font-size:10.5px;line-height:10.5px;color:#fff;font-weight:bold;letter-spacing:0px">Location</div>
<div class="b" style="left:247.00px;top:173.50px;width:13.00px;height:13.50px;background:#fff;border:1px solid #dcdcdc;box-sizing:border-box"></div>
<svg class="b" style="left:251px;top:178px;" width="6" height="4" viewBox="0 0 6 4"><path d="M0 0h6L3 3.5z" fill="#555"/></svg>
<div class="t" style="left:262.50px;top:176.11px;font-size:10.5px;line-height:10.5px;color:#fff;font-weight:bold;letter-spacing:0.37px">Department</div>
<div class="b" style="left:329.00px;top:173.50px;width:13.00px;height:13.50px;background:#fff;border:1px solid #dcdcdc;box-sizing:border-box"></div>
<svg class="b" style="left:333px;top:178px;" width="6" height="4" viewBox="0 0 6 4"><path d="M0 0h6L3 3.5z" fill="#555"/></svg>
<div class="t" style="left:344.50px;top:176.11px;font-size:10.5px;line-height:10.5px;color:#fff;font-weight:bold;letter-spacing:0.05px">Year</div>
<div class="b" style="left:370.00px;top:173.50px;width:13.00px;height:13.50px;background:#fff;border:1px solid #dcdcdc;box-sizing:border-box"></div>
<svg class="b" style="left:374px;top:178px;" width="6" height="4" viewBox="0 0 6 4"><path d="M0 0h6L3 3.5z" fill="#555"/></svg>
<div class="t" style="left:385.50px;top:176.11px;font-size:10.5px;line-height:10.5px;color:#fff;font-weight:bold;letter-spacing:0.2px">Period</div>
<div class="b" style="left:423.00px;top:173.50px;width:13.00px;height:13.50px;background:#fff;border:1px solid #dcdcdc;box-sizing:border-box"></div>
<svg class="b" style="left:427px;top:178px;" width="6" height="4" viewBox="0 0 6 4"><path d="M0 0h6L3 3.5z" fill="#555"/></svg>
<div class="t" style="left:438.50px;top:176.11px;font-size:10.5px;line-height:10.5px;color:#fff;font-weight:bold;letter-spacing:0.6px">Value</div>
<div class="b" style="left:471.00px;top:173.50px;width:13.00px;height:13.50px;background:#fff;border:1px solid #dcdcdc;box-sizing:border-box"></div>
<svg class="b" style="left:475px;top:178px;" width="6" height="4" viewBox="0 0 6 4"><path d="M0 0h6L3 3.5z" fill="#555"/></svg>
<div class="t" style="left:17.00px;top:193.34px;width:60px;text-align:right;font-size:10.5px;line-height:10.5px;color:#262626;font-weight:normal;letter-spacing:0.1px">6001</div>
<div class="t" style="left:81.00px;top:192.91px;font-size:11px;line-height:11px;color:#262626;font-weight:normal;letter-spacing:0.3px">Marketing</div>
<div class="t" style="left:201.50px;top:192.91px;font-size:11px;line-height:11px;color:#262626;font-weight:normal;letter-spacing:0.15px">Location A</div>
<div class="t" style="left:262.50px;top:192.91px;font-size:11px;line-height:11px;color:#262626;font-weight:normal;letter-spacing:0.45px">Marketing</div>
<div class="t" style="left:342.00px;top:193.34px;width:40px;text-align:right;font-size:10.5px;line-height:10.5px;color:#262626;font-weight:normal;">2024</div>
<div class="t" style="left:395.00px;top:193.34px;width:40px;text-align:right;font-size:10.5px;line-height:10.5px;color:#262626;font-weight:normal;">1</div>
<div class="t" style="left:437.00px;top:193.34px;width:46px;text-align:right;font-size:10.5px;line-height:10.5px;color:#262626;font-weight:normal;letter-spacing:-0.1px">5000</div>
<div class="t" style="left:17.00px;top:210.06px;width:60px;text-align:right;font-size:10.5px;line-height:10.5px;color:#262626;font-weight:normal;letter-spacing:0.1px">7001</div>
<div class="t" style="left:81.00px;top:209.64px;font-size:11px;line-height:11px;color:#262626;font-weight:normal;letter-spacing:0.3px">Rent</div>
<div class="t" style="left:201.50px;top:209.64px;font-size:11px;line-height:11px;color:#262626;font-weight:normal;letter-spacing:0.15px">Location B</div>
<div class="t" style="left:262.50px;top:209.64px;font-size:11px;line-height:11px;color:#262626;font-weight:normal;letter-spacing:0.45px">Rent</div>
<div class="t" style="left:342.00px;top:210.06px;width:40px;text-align:right;font-size:10.5px;line-height:10.5px;color:#262626;font-weight:normal;">2024</div>
<div class="t" style="left:395.00px;top:210.06px;width:40px;text-align:right;font-size:10.5px;line-height:10.5px;color:#262626;font-weight:normal;">1</div>
<div class="t" style="left:437.00px;top:210.06px;width:46px;text-align:right;font-size:10.5px;line-height:10.5px;color:#262626;font-weight:normal;letter-spacing:-0.1px">12000</div>
<div class="t" style="left:17.00px;top:226.79px;width:60px;text-align:right;font-size:10.5px;line-height:10.5px;color:#262626;font-weight:normal;letter-spacing:0.1px">5001</div>
<div class="t" style="left:81.00px;top:226.37px;font-size:11px;line-height:11px;color:#262626;font-weight:normal;letter-spacing:0.3px">Salaries</div>
<div class="t" style="left:201.50px;top:226.37px;font-size:11px;line-height:11px;color:#262626;font-weight:normal;letter-spacing:0.15px">Location C</div>
<div class="t" style="left:262.50px;top:226.37px;font-size:11px;line-height:11px;color:#262626;font-weight:normal;letter-spacing:0.45px">HR</div>
<div class="t" style="left:342.00px;top:226.79px;width:40px;text-align:right;font-size:10.5px;line-height:10.5px;color:#262626;font-weight:normal;">2024</div>
<div class="t" style="left:395.00px;top:226.79px;width:40px;text-align:right;font-size:10.5px;line-height:10.5px;color:#262626;font-weight:normal;">1</div>
<div class="t" style="left:437.00px;top:226.79px;width:46px;text-align:right;font-size:10.5px;line-height:10.5px;color:#262626;font-weight:normal;letter-spacing:-0.1px">20000</div>
<div class="t" style="left:17.00px;top:243.52px;width:60px;text-align:right;font-size:10.5px;line-height:10.5px;color:#262626;font-weight:normal;letter-spacing:0.1px">4001</div>
<div class="t" style="left:81.00px;top:243.09px;font-size:11px;line-height:11px;color:#262626;font-weight:normal;letter-spacing:0.3px">Subscription Revenue</div>
<div class="t" style="left:201.50px;top:243.09px;font-size:11px;line-height:11px;color:#262626;font-weight:normal;letter-spacing:0.15px">Location A</div>
<div class="t" style="left:262.50px;top:243.09px;font-size:11px;line-height:11px;color:#262626;font-weight:normal;letter-spacing:0.45px">Sales</div>
<div class="t" style="left:342.00px;top:243.52px;width:40px;text-align:right;font-size:10.5px;line-height:10.5px;color:#262626;font-weight:normal;">2024</div>
<div class="t" style="left:395.00px;top:243.52px;width:40px;text-align:right;font-size:10.5px;line-height:10.5px;color:#262626;font-weight:normal;">1</div>
<div class="t" style="left:437.00px;top:243.52px;width:46px;text-align:right;font-size:10.5px;line-height:10.5px;color:#262626;font-weight:normal;letter-spacing:-0.1px">8000</div>
<div class="t" style="left:17.00px;top:260.24px;width:60px;text-align:right;font-size:10.5px;line-height:10.5px;color:#262626;font-weight:normal;letter-spacing:0.1px">4002</div>
<div class="t" style="left:81.00px;top:259.82px;font-size:11px;line-height:11px;color:#262626;font-weight:normal;letter-spacing:0.3px">Professional Services</div>
<div class="t" style="left:201.50px;top:259.82px;font-size:11px;line-height:11px;color:#262626;font-weight:normal;letter-spacing:0.15px">Location B</div>
<div class="t" style="left:262.50px;top:259.82px;font-size:11px;line-height:11px;color:#262626;font-weight:normal;letter-spacing:0.45px">Sales</div>
<div class="t" style="left:342.00px;top:260.24px;width:40px;text-align:right;font-size:10.5px;line-height:10.5px;color:#262626;font-weight:normal;">2024</div>
<div class="t" style="left:395.00px;top:260.24px;width:40px;text-align:right;font-size:10.5px;line-height:10.5px;color:#262626;font-weight:normal;">1</div>
<div class="t" style="left:437.00px;top:260.24px;width:46px;text-align:right;font-size:10.5px;line-height:10.5px;color:#262626;font-weight:normal;letter-spacing:-0.1px">25000</div>
<div class="t" style="left:17.00px;top:276.97px;width:60px;text-align:right;font-size:10.5px;line-height:10.5px;color:#262626;font-weight:normal;letter-spacing:0.1px">6001</div>
<div class="t" style="left:81.00px;top:276.54px;font-size:11px;line-height:11px;color:#262626;font-weight:normal;letter-spacing:0.3px">Marketing</div>
<div class="t" style="left:201.50px;top:276.54px;font-size:11px;line-height:11px;color:#262626;font-weight:normal;letter-spacing:0.15px">Location A</div>
<div class="t" style="left:262.50px;top:276.54px;font-size:11px;line-height:11px;color:#262626;font-weight:normal;letter-spacing:0.45px">Marketing</div>
<div class="t" style="left:342.00px;top:276.97px;width:40px;text-align:right;font-size:10.5px;line-height:10.5px;color:#262626;font-weight:normal;">2024</div>
<div class="t" style="left:395.00px;top:276.97px;width:40px;text-align:right;font-size:10.5px;line-height:10.5px;color:#262626;font-weight:normal;">2</div>
<div class="t" style="left:437.00px;top:276.97px;width:46px;text-align:right;font-size:10.5px;line-height:10.5px;color:#262626;font-weight:normal;letter-spacing:-0.1px">5000</div>
<div class="t" style="left:17.00px;top:293.69px;width:60px;text-align:right;font-size:10.5px;line-height:10.5px;color:#262626;font-weight:normal;letter-spacing:0.1px">7001</div>
<div class="t" style="left:81.00px;top:293.27px;font-size:11px;line-height:11px;color:#262626;font-weight:normal;letter-spacing:0.3px">Rent</div>
<div class="t" style="left:201.50px;top:293.27px;font-size:11px;line-height:11px;color:#262626;font-weight:normal;letter-spacing:0.15px">Location B</div>
<div class="t" style="left:262.50px;top:293.27px;font-size:11px;line-height:11px;color:#262626;font-weight:normal;letter-spacing:0.45px">Rent</div>
<div class="t" style="left:342.00px;top:293.69px;width:40px;text-align:right;font-size:10.5px;line-height:10.5px;color:#262626;font-weight:normal;">2024</div>
<div class="t" style="left:395.00px;top:293.69px;width:40px;text-align:right;font-size:10.5px;line-height:10.5px;color:#262626;font-weight:normal;">2</div>
<div class="t" style="left:437.00px;top:293.69px;width:46px;text-align:right;font-size:10.5px;line-height:10.5px;color:#262626;font-weight:normal;letter-spacing:-0.1px">12000</div>
<div class="t" style="left:17.00px;top:310.42px;width:60px;text-align:right;font-size:10.5px;line-height:10.5px;color:#262626;font-weight:normal;letter-spacing:0.1px">5001</div>
<div class="t" style="left:81.00px;top:310.00px;font-size:11px;line-height:11px;color:#262626;font-weight:normal;letter-spacing:0.3px">Salaries</div>
<div class="t" style="left:201.50px;top:310.00px;font-size:11px;line-height:11px;color:#262626;font-weight:normal;letter-spacing:0.15px">Location C</div>
<div class="t" style="left:262.50px;top:310.00px;font-size:11px;line-height:11px;color:#262626;font-weight:normal;letter-spacing:0.45px">HR</div>
<div class="t" style="left:342.00px;top:310.42px;width:40px;text-align:right;font-size:10.5px;line-height:10.5px;color:#262626;font-weight:normal;">2024</div>
<div class="t" style="left:395.00px;top:310.42px;width:40px;text-align:right;font-size:10.5px;line-height:10.5px;color:#262626;font-weight:normal;">2</div>
<div class="t" style="left:437.00px;top:310.42px;width:46px;text-align:right;font-size:10.5px;line-height:10.5px;color:#262626;font-weight:normal;letter-spacing:-0.1px">20000</div>
<div class="t" style="left:17.00px;top:327.15px;width:60px;text-align:right;font-size:10.5px;line-height:10.5px;color:#262626;font-weight:normal;letter-spacing:0.1px">4001</div>
<div class="t" style="left:81.00px;top:326.72px;font-size:11px;line-height:11px;color:#262626;font-weight:normal;letter-spacing:0.3px">Subscription Revenue</div>
<div class="t" style="left:201.50px;top:326.72px;font-size:11px;line-height:11px;color:#262626;font-weight:normal;letter-spacing:0.15px">Location A</div>
<div class="t" style="left:262.50px;top:326.72px;font-size:11px;line-height:11px;color:#262626;font-weight:normal;letter-spacing:0.45px">Sales</div>
<div class="t" style="left:342.00px;top:327.15px;width:40px;text-align:right;font-size:10.5px;line-height:10.5px;color:#262626;font-weight:normal;">2024</div>
<div class="t" style="left:395.00px;top:327.15px;width:40px;text-align:right;font-size:10.5px;line-height:10.5px;color:#262626;font-weight:normal;">2</div>
<div class="t" style="left:437.00px;top:327.15px;width:46px;text-align:right;font-size:10.5px;line-height:10.5px;color:#262626;font-weight:normal;letter-spacing:-0.1px">12000</div>
<div class="t" style="left:17.00px;top:343.87px;width:60px;text-align:right;font-size:10.5px;line-height:10.5px;color:#262626;font-weight:normal;letter-spacing:0.1px">4002</div>
<div class="t" style="left:81.00px;top:343.45px;font-size:11px;line-height:11px;color:#262626;font-weight:normal;letter-spacing:0.3px">Professional Services</div>
<div class="t" style="left:201.50px;top:343.45px;font-size:11px;line-height:11px;color:#262626;font-weight:normal;letter-spacing:0.15px">Location B</div>
<div class="t" style="left:262.50px;top:343.45px;font-size:11px;line-height:11px;color:#262626;font-weight:normal;letter-spacing:0.45px">Sales</div>
<div class="t" style="left:342.00px;top:343.87px;width:40px;text-align:right;font-size:10.5px;line-height:10.5px;color:#262626;font-weight:normal;">2024</div>
<div class="t" style="left:395.00px;top:343.87px;width:40px;text-align:right;font-size:10.5px;line-height:10.5px;color:#262626;font-weight:normal;">2</div>
<div class="t" style="left:437.00px;top:343.87px;width:46px;text-align:right;font-size:10.5px;line-height:10.5px;color:#262626;font-weight:normal;letter-spacing:-0.1px">25000</div>
<div class="t" style="left:17.00px;top:360.60px;width:60px;text-align:right;font-size:10.5px;line-height:10.5px;color:#262626;font-weight:normal;letter-spacing:0.1px">6001</div>
<div class="t" style="left:81.00px;top:360.17px;font-size:11px;line-height:11px;color:#262626;font-weight:normal;letter-spacing:0.3px">Marketing</div>
<div class="t" style="left:201.50px;top:360.17px;font-size:11px;line-height:11px;color:#262626;font-weight:normal;letter-spacing:0.15px">Location A</div>
<div class="t" style="left:262.50px;top:360.17px;font-size:11px;line-height:11px;color:#262626;font-weight:normal;letter-spacing:0.45px">Marketing</div>
<div class="t" style="left:342.00px;top:360.60px;width:40px;text-align:right;font-size:10.5px;line-height:10.5px;color:#262626;font-weight:normal;">2024</div>
<div class="t" style="left:395.00px;top:360.60px;width:40px;text-align:right;font-size:10.5px;line-height:10.5px;color:#262626;font-weight:normal;">3</div>
<div class="t" style="left:437.00px;top:360.60px;width:46px;text-align:right;font-size:10.5px;line-height:10.5px;color:#262626;font-weight:normal;letter-spacing:-0.1px">5000</div>
<div class="t" style="left:17.00px;top:377.32px;width:60px;text-align:right;font-size:10.5px;line-height:10.5px;color:#262626;font-weight:normal;letter-spacing:0.1px">7001</div>
<div class="t" style="left:81.00px;top:376.90px;font-size:11px;line-height:11px;color:#262626;font-weight:normal;letter-spacing:0.3px">Rent</div>
<div class="t" style="left:201.50px;top:376.90px;font-size:11px;line-height:11px;color:#262626;font-weight:normal;letter-spacing:0.15px">Location B</div>
<div class="t" style="left:262.50px;top:376.90px;font-size:11px;line-height:11px;color:#262626;font-weight:normal;letter-spacing:0.45px">Rent</div>
<div class="t" style="left:342.00px;top:377.32px;width:40px;text-align:right;font-size:10.5px;line-height:10.5px;color:#262626;font-weight:normal;">2024</div>
<div class="t" style="left:395.00px;top:377.32px;width:40px;text-align:right;font-size:10.5px;line-height:10.5px;color:#262626;font-weight:normal;">3</div>
<div class="t" style="left:437.00px;top:377.32px;width:46px;text-align:right;font-size:10.5px;line-height:10.5px;color:#262626;font-weight:normal;letter-spacing:-0.1px">12000</div>
<div class="t" style="left:17.00px;top:394.05px;width:60px;text-align:right;font-size:10.5px;line-height:10.5px;color:#262626;font-weight:normal;letter-spacing:0.1px">5001</div>
<div class="t" style="left:81.00px;top:393.63px;font-size:11px;line-height:11px;color:#262626;font-weight:normal;letter-spacing:0.3px">Salaries</div>
<div class="t" style="left:201.50px;top:393.63px;font-size:11px;line-height:11px;color:#262626;font-weight:normal;letter-spacing:0.15px">Location C</div>
<div class="t" style="left:262.50px;top:393.63px;font-size:11px;line-height:11px;color:#262626;font-weight:normal;letter-spacing:0.45px">HR</div>
<div class="t" style="left:342.00px;top:394.05px;width:40px;text-align:right;font-size:10.5px;line-height:10.5px;color:#262626;font-weight:normal;">2024</div>
<div class="t" style="left:395.00px;top:394.05px;width:40px;text-align:right;font-size:10.5px;line-height:10.5px;color:#262626;font-weight:normal;">3</div>
<div class="t" style="left:437.00px;top:394.05px;width:46px;text-align:right;font-size:10.5px;line-height:10.5px;color:#262626;font-weight:normal;letter-spacing:-0.1px">20000</div>
<div class="t" style="left:17.00px;top:410.78px;width:60px;text-align:right;font-size:10.5px;line-height:10.5px;color:#262626;font-weight:normal;letter-spacing:0.1px">4001</div>
<div class="t" style="left:81.00px;top:410.35px;font-size:11px;line-height:11px;color:#262626;font-weight:normal;letter-spacing:0.3px">Subscription Revenue</div>
<div class="t" style="left:201.50px;top:410.35px;font-size:11px;line-height:11px;color:#262626;font-weight:normal;letter-spacing:0.15px">Location A</div>
<div class="t" style="left:262.50px;top:410.35px;font-size:11px;line-height:11px;color:#262626;font-weight:normal;letter-spacing:0.45px">Sales</div>
<div class="t" style="left:342.00px;top:410.78px;width:40px;text-align:right;font-size:10.5px;line-height:10.5px;color:#262626;font-weight:normal;">2024</div>
<div class="t" style="left:395.00px;top:410.78px;width:40px;text-align:right;font-size:10.5px;line-height:10.5px;color:#262626;font-weight:normal;">3</div>
<div class="t" style="left:437.00px;top:410.78px;width:46px;text-align:right;font-size:10.5px;line-height:10.5px;color:#262626;font-weight:normal;letter-spacing:-0.1px">15000</div>
<div class="t" style="left:17.00px;top:427.50px;width:60px;text-align:right;font-size:10.5px;line-height:10.5px;color:#262626;font-weight:normal;letter-spacing:0.1px">4002</div>
<div class="t" style="left:81.00px;top:427.08px;font-size:11px;line-height:11px;color:#262626;font-weight:normal;letter-spacing:0.3px">Professional Services</div>
<div class="t" style="left:201.50px;top:427.08px;font-size:11px;line-height:11px;color:#262626;font-weight:normal;letter-spacing:0.15px">Location B</div>
<div class="t" style="left:262.50px;top:427.08px;font-size:11px;line-height:11px;color:#262626;font-weight:normal;letter-spacing:0.45px">Sales</div>
<div class="t" style="left:342.00px;top:427.50px;width:40px;text-align:right;font-size:10.5px;line-height:10.5px;color:#262626;font-weight:normal;">2024</div>
<div class="t" style="left:395.00px;top:427.50px;width:40px;text-align:right;font-size:10.5px;line-height:10.5px;color:#262626;font-weight:normal;">3</div>
<div class="t" style="left:437.00px;top:427.50px;width:46px;text-align:right;font-size:10.5px;line-height:10.5px;color:#262626;font-weight:normal;letter-spacing:-0.1px">15000</div>
<div class="t" style="left:17.00px;top:444.23px;width:60px;text-align:right;font-size:10.5px;line-height:10.5px;color:#262626;font-weight:normal;letter-spacing:0.1px">6001</div>
<div class="t" style="left:81.00px;top:443.80px;font-size:11px;line-height:11px;color:#262626;font-weight:normal;letter-spacing:0.3px">Marketing</div>
<div class="t" style="left:201.50px;top:443.80px;font-size:11px;line-height:11px;color:#262626;font-weight:normal;letter-spacing:0.15px">Location A</div>
<div class="t" style="left:262.50px;top:443.80px;font-size:11px;line-height:11px;color:#262626;font-weight:normal;letter-spacing:0.45px">Marketing</div>
<div class="t" style="left:342.00px;top:444.23px;width:40px;text-align:right;font-size:10.5px;line-height:10.5px;color:#262626;font-weight:normal;">2024</div>
<div class="t" style="left:395.00px;top:444.23px;width:40px;text-align:right;font-size:10.5px;line-height:10.5px;color:#262626;font-weight:normal;">4</div>
<div class="t" style="left:437.00px;top:444.23px;width:46px;text-align:right;font-size:10.5px;line-height:10.5px;color:#262626;font-weight:normal;letter-spacing:-0.1px">5000</div>
<div class="t" style="left:17.00px;top:460.95px;width:60px;text-align:right;font-size:10.5px;line-height:10.5px;color:#262626;font-weight:normal;letter-spacing:0.1px">7001</div>
<div class="t" style="left:81.00px;top:460.53px;font-size:11px;line-height:11px;color:#262626;font-weight:normal;letter-spacing:0.3px">Rent</div>
<div class="t" style="left:201.50px;top:460.53px;font-size:11px;line-height:11px;color:#262626;font-weight:normal;letter-spacing:0.15px">Location B</div>
<div class="t" style="left:262.50px;top:460.53px;font-size:11px;line-height:11px;color:#262626;font-weight:normal;letter-spacing:0.45px">Rent</div>
<div class="t" style="left:342.00px;top:460.95px;width:40px;text-align:right;font-size:10.5px;line-height:10.5px;color:#262626;font-weight:normal;">2024</div>
<div class="t" style="left:395.00px;top:460.95px;width:40px;text-align:right;font-size:10.5px;line-height:10.5px;color:#262626;font-weight:normal;">4</div>
<div class="t" style="left:437.00px;top:460.95px;width:46px;text-align:right;font-size:10.5px;line-height:10.5px;color:#262626;font-weight:normal;letter-spacing:-0.1px">12000</div>
<div class="t" style="left:17.00px;top:477.68px;width:60px;text-align:right;font-size:10.5px;line-height:10.5px;color:#262626;font-weight:normal;letter-spacing:0.1px">5001</div>
<div class="t" style="left:81.00px;top:477.26px;font-size:11px;line-height:11px;color:#262626;font-weight:normal;letter-spacing:0.3px">Salaries</div>
<div class="t" style="left:201.50px;top:477.26px;font-size:11px;line-height:11px;color:#262626;font-weight:normal;letter-spacing:0.15px">Location C</div>
<div class="t" style="left:262.50px;top:477.26px;font-size:11px;line-height:11px;color:#262626;font-weight:normal;letter-spacing:0.45px">HR</div>
<div class="t" style="left:342.00px;top:477.68px;width:40px;text-align:right;font-size:10.5px;line-height:10.5px;color:#262626;font-weight:normal;">2024</div>
<div class="t" style="left:395.00px;top:477.68px;width:40px;text-align:right;font-size:10.5px;line-height:10.5px;color:#262626;font-weight:normal;">4</div>
<div class="t" style="left:437.00px;top:477.68px;width:46px;text-align:right;font-size:10.5px;line-height:10.5px;color:#262626;font-weight:normal;letter-spacing:-0.1px">25000</div>
<div class="t" style="left:17.00px;top:494.41px;width:60px;text-align:right;font-size:10.5px;line-height:10.5px;color:#262626;font-weight:normal;letter-spacing:0.1px">4001</div>
<div class="t" style="left:81.00px;top:493.98px;font-size:11px;line-height:11px;color:#262626;font-weight:normal;letter-spacing:0.3px">Subscription Revenue</div>
<div class="t" style="left:201.50px;top:493.98px;font-size:11px;line-height:11px;color:#262626;font-weight:normal;letter-spacing:0.15px">Location A</div>
<div class="t" style="left:262.50px;top:493.98px;font-size:11px;line-height:11px;color:#262626;font-weight:normal;letter-spacing:0.45px">Sales</div>
<div class="t" style="left:342.00px;top:494.41px;width:40px;text-align:right;font-size:10.5px;line-height:10.5px;color:#262626;font-weight:normal;">2024</div>
<div class="t" style="left:395.00px;top:494.41px;width:40px;text-align:right;font-size:10.5px;line-height:10.5px;color:#262626;font-weight:normal;">4</div>
<div class="t" style="left:437.00px;top:494.41px;width:46px;text-align:right;font-size:10.5px;line-height:10.5px;color:#262626;font-weight:normal;letter-spacing:-0.1px">17000</div>
<div class="t" style="left:17.00px;top:511.13px;width:60px;text-align:right;font-size:10.5px;line-height:10.5px;color:#262626;font-weight:normal;letter-spacing:0.1px">4002</div>
<div class="t" style="left:81.00px;top:510.71px;font-size:11px;line-height:11px;color:#262626;font-weight:normal;letter-spacing:0.3px">Professional Services</div>
<div class="t" style="left:201.50px;top:510.71px;font-size:11px;line-height:11px;color:#262626;font-weight:normal;letter-spacing:0.15px">Location B</div>
<div class="t" style="left:262.50px;top:510.71px;font-size:11px;line-height:11px;color:#262626;font-weight:normal;letter-spacing:0.45px">Sales</div>
<div class="t" style="left:342.00px;top:511.13px;width:40px;text-align:right;font-size:10.5px;line-height:10.5px;color:#262626;font-weight:normal;">2024</div>
<div class="t" style="left:395.00px;top:511.13px;width:40px;text-align:right;font-size:10.5px;line-height:10.5px;color:#262626;font-weight:normal;">4</div>
<div class="t" style="left:437.00px;top:511.13px;width:46px;text-align:right;font-size:10.5px;line-height:10.5px;color:#262626;font-weight:normal;letter-spacing:-0.1px">20000</div>
<div class="t" style="left:17.00px;top:527.86px;width:60px;text-align:right;font-size:10.5px;line-height:10.5px;color:#262626;font-weight:normal;letter-spacing:0.1px">6001</div>
<div class="t" style="left:81.00px;top:527.43px;font-size:11px;line-height:11px;color:#262626;font-weight:normal;letter-spacing:0.3px">Marketing</div>
<div class="t" style="left:201.50px;top:527.43px;font-size:11px;line-height:11px;color:#262626;font-weight:normal;letter-spacing:0.15px">Location A</div>
<div class="t" style="left:262.50px;top:527.43px;font-size:11px;line-height:11px;color:#262626;font-weight:normal;letter-spacing:0.45px">Marketing</div>
<div class="t" style="left:342.00px;top:527.86px;width:40px;text-align:right;font-size:10.5px;line-height:10.5px;color:#262626;font-weight:normal;">2024</div>
<div class="t" style="left:395.00px;top:527.86px;width:40px;text-align:right;font-size:10.5px;line-height:10.5px;color:#262626;font-weight:normal;">5</div>
<div class="t" style="left:437.00px;top:527.86px;width:46px;text-align:right;font-size:10.5px;line-height:10.5px;color:#262626;font-weight:normal;letter-spacing:-0.1px">5000</div>
<div class="t" style="left:17.00px;top:544.58px;width:60px;text-align:right;font-size:10.5px;line-height:10.5px;color:#262626;font-weight:normal;letter-spacing:0.1px">7001</div>
<div class="t" style="left:81.00px;top:544.16px;font-size:11px;line-height:11px;color:#262626;font-weight:normal;letter-spacing:0.3px">Rent</div>
<div class="t" style="left:201.50px;top:544.16px;font-size:11px;line-height:11px;color:#262626;font-weight:normal;letter-spacing:0.15px">Location B</div>
<div class="t" style="left:262.50px;top:544.16px;font-size:11px;line-height:11px;color:#262626;font-weight:normal;letter-spacing:0.45px">Rent</div>
<div class="t" style="left:342.00px;top:544.58px;width:40px;text-align:right;font-size:10.5px;line-height:10.5px;color:#262626;font-weight:normal;">2024</div>
<div class="t" style="left:395.00px;top:544.58px;width:40px;text-align:right;font-size:10.5px;line-height:10.5px;color:#262626;font-weight:normal;">5</div>
<div class="t" style="left:437.00px;top:544.58px;width:46px;text-align:right;font-size:10.5px;line-height:10.5px;color:#262626;font-weight:normal;letter-spacing:-0.1px">12000</div>
<div class="t" style="left:17.00px;top:561.31px;width:60px;text-align:right;font-size:10.5px;line-height:10.5px;color:#262626;font-weight:normal;letter-spacing:0.1px">5001</div>
<div class="t" style="left:81.00px;top:560.89px;font-size:11px;line-height:11px;color:#262626;font-weight:normal;letter-spacing:0.3px">Salaries</div>
<div class="t" style="left:201.50px;top:560.89px;font-size:11px;line-height:11px;color:#262626;font-weight:normal;letter-spacing:0.15px">Location C</div>
<div class="t" style="left:262.50px;top:560.89px;font-size:11px;line-height:11px;color:#262626;font-weight:normal;letter-spacing:0.45px">HR</div>
<div class="t" style="left:342.00px;top:561.31px;width:40px;text-align:right;font-size:10.5px;line-height:10.5px;color:#262626;font-weight:normal;">2024</div>
<div class="t" style="left:395.00px;top:561.31px;width:40px;text-align:right;font-size:10.5px;line-height:10.5px;color:#262626;font-weight:normal;">5</div>
<div class="t" style="left:437.00px;top:561.31px;width:46px;text-align:right;font-size:10.5px;line-height:10.5px;color:#262626;font-weight:normal;letter-spacing:-0.1px">30000</div>
<div class="t" style="left:17.00px;top:578.04px;width:60px;text-align:right;font-size:10.5px;line-height:10.5px;color:#262626;font-weight:normal;letter-spacing:0.1px">4001</div>
<div class="t" style="left:81.00px;top:577.61px;font-size:11px;line-height:11px;color:#262626;font-weight:normal;letter-spacing:0.3px">Subscription Revenue</div>
<div class="t" style="left:201.50px;top:577.61px;font-size:11px;line-height:11px;color:#262626;font-weight:normal;letter-spacing:0.15px">Location A</div>
<div class="t" style="left:262.50px;top:577.61px;font-size:11px;line-height:11px;color:#262626;font-weight:normal;letter-spacing:0.45px">Sales</div>
<div class="t" style="left:342.00px;top:578.04px;width:40px;text-align:right;font-size:10.5px;line-height:10.5px;color:#262626;font-weight:normal;">2024</div>
<div class="t" style="left:395.00px;top:578.04px;width:40px;text-align:right;font-size:10.5px;line-height:10.5px;color:#262626;font-weight:normal;">5</div>
<div class="t" style="left:437.00px;top:578.04px;width:46px;text-align:right;font-size:10.5px;line-height:10.5px;color:#262626;font-weight:normal;letter-spacing:-0.1px">21000</div>
<div class="t" style="left:17.00px;top:594.76px;width:60px;text-align:right;font-size:10.5px;line-height:10.5px;color:#262626;font-weight:normal;letter-spacing:0.1px">4002</div>
<div class="t" style="left:81.00px;top:594.34px;font-size:11px;line-height:11px;color:#262626;font-weight:normal;letter-spacing:0.3px">Professional Services</div>
<div class="t" style="left:201.50px;top:594.34px;font-size:11px;line-height:11px;color:#262626;font-weight:normal;letter-spacing:0.15px">Location B</div>
<div class="t" style="left:262.50px;top:594.34px;font-size:11px;line-height:11px;color:#262626;font-weight:normal;letter-spacing:0.45px">Sales</div>
<div class="t" style="left:342.00px;top:594.76px;width:40px;text-align:right;font-size:10.5px;line-height:10.5px;color:#262626;font-weight:normal;">2024</div>
<div class="t" style="left:395.00px;top:594.76px;width:40px;text-align:right;font-size:10.5px;line-height:10.5px;color:#262626;font-weight:normal;">5</div>
<div class="t" style="left:437.00px;top:594.76px;width:46px;text-align:right;font-size:10.5px;line-height:10.5px;color:#262626;font-weight:normal;letter-spacing:-0.1px">20000</div>
<div class="t" style="left:17.00px;top:611.49px;width:60px;text-align:right;font-size:10.5px;line-height:10.5px;color:#262626;font-weight:normal;letter-spacing:0.1px">6001</div>
<div class="t" style="left:81.00px;top:611.06px;font-size:11px;line-height:11px;color:#262626;font-weight:normal;letter-spacing:0.3px">Marketing</div>
<div class="t" style="left:201.50px;top:611.06px;font-size:11px;line-height:11px;color:#262626;font-weight:normal;letter-spacing:0.15px">Location A</div>
<div class="t" style="left:262.50px;top:611.06px;font-size:11px;line-height:11px;color:#262626;font-weight:normal;letter-spacing:0.45px">Marketing</div>
<div class="t" style="left:342.00px;top:611.49px;width:40px;text-align:right;font-size:10.5px;line-height:10.5px;color:#262626;font-weight:normal;">2024</div>
<div class="t" style="left:395.00px;top:611.49px;width:40px;text-align:right;font-size:10.5px;line-height:10.5px;color:#262626;font-weight:normal;">6</div>
<div class="t" style="left:437.00px;top:611.49px;width:46px;text-align:right;font-size:10.5px;line-height:10.5px;color:#262626;font-weight:normal;letter-spacing:-0.1px">5000</div>
<div class="t" style="left:17.00px;top:628.21px;width:60px;text-align:right;font-size:10.5px;line-height:10.5px;color:#262626;font-weight:normal;letter-spacing:0.1px">7001</div>
<div class="t" style="left:81.00px;top:627.79px;font-size:11px;line-height:11px;color:#262626;font-weight:normal;letter-spacing:0.3px">Rent</div>
<div class="t" style="left:201.50px;top:627.79px;font-size:11px;line-height:11px;color:#262626;font-weight:normal;letter-spacing:0.15px">Location B</div>
<div class="t" style="left:262.50px;top:627.79px;font-size:11px;line-height:11px;color:#262626;font-weight:normal;letter-spacing:0.45px">Rent</div>
<div class="t" style="left:342.00px;top:628.21px;width:40px;text-align:right;font-size:10.5px;line-height:10.5px;color:#262626;font-weight:normal;">2024</div>
<div class="t" style="left:395.00px;top:628.21px;width:40px;text-align:right;font-size:10.5px;line-height:10.5px;color:#262626;font-weight:normal;">6</div>
<div class="t" style="left:437.00px;top:628.21px;width:46px;text-align:right;font-size:10.5px;line-height:10.5px;color:#262626;font-weight:normal;letter-spacing:-0.1px">12000</div>
<div class="t" style="left:17.00px;top:644.94px;width:60px;text-align:right;font-size:10.5px;line-height:10.5px;color:#262626;font-weight:normal;letter-spacing:0.1px">5001</div>
<div class="t" style="left:81.00px;top:644.52px;font-size:11px;line-height:11px;color:#262626;font-weight:normal;letter-spacing:0.3px">Salaries</div>
<div class="t" style="left:201.50px;top:644.52px;font-size:11px;line-height:11px;color:#262626;font-weight:normal;letter-spacing:0.15px">Location C</div>
<div class="t" style="left:262.50px;top:644.52px;font-size:11px;line-height:11px;color:#262626;font-weight:normal;letter-spacing:0.45px">HR</div>
<div class="t" style="left:342.00px;top:644.94px;width:40px;text-align:right;font-size:10.5px;line-height:10.5px;color:#262626;font-weight:normal;">2024</div>
<div class="t" style="left:395.00px;top:644.94px;width:40px;text-align:right;font-size:10.5px;line-height:10.5px;color:#262626;font-weight:normal;">6</div>
<div class="t" style="left:437.00px;top:644.94px;width:46px;text-align:right;font-size:10.5px;line-height:10.5px;color:#262626;font-weight:normal;letter-spacing:-0.1px">35000</div>
<div class="t" style="left:17.00px;top:661.67px;width:60px;text-align:right;font-size:10.5px;line-height:10.5px;color:#262626;font-weight:normal;letter-spacing:0.1px">4001</div>
<div class="t" style="left:81.00px;top:661.24px;font-size:11px;line-height:11px;color:#262626;font-weight:normal;letter-spacing:0.3px">Subscription Revenue</div>
<div class="t" style="left:201.50px;top:661.24px;font-size:11px;line-height:11px;color:#262626;font-weight:normal;letter-spacing:0.15px">Location A</div>
<div class="t" style="left:262.50px;top:661.24px;font-size:11px;line-height:11px;color:#262626;font-weight:normal;letter-spacing:0.45px">Sales</div>
<div class="t" style="left:342.00px;top:661.67px;width:40px;text-align:right;font-size:10.5px;line-height:10.5px;color:#262626;font-weight:normal;">2024</div>
<div class="t" style="left:395.00px;top:661.67px;width:40px;text-align:right;font-size:10.5px;line-height:10.5px;color:#262626;font-weight:normal;">6</div>
<div class="t" style="left:437.00px;top:661.67px;width:46px;text-align:right;font-size:10.5px;line-height:10.5px;color:#262626;font-weight:normal;letter-spacing:-0.1px">26000</div>
<div class="t" style="left:17.00px;top:678.39px;width:60px;text-align:right;font-size:10.5px;line-height:10.5px;color:#262626;font-weight:normal;letter-spacing:0.1px">4002</div>
<div class="t" style="left:81.00px;top:677.97px;font-size:11px;line-height:11px;color:#262626;font-weight:normal;letter-spacing:0.3px">Professional Services</div>
<div class="t" style="left:201.50px;top:677.97px;font-size:11px;line-height:11px;color:#262626;font-weight:normal;letter-spacing:0.15px">Location B</div>
<div class="t" style="left:262.50px;top:677.97px;font-size:11px;line-height:11px;color:#262626;font-weight:normal;letter-spacing:0.45px">Sales</div>
<div class="t" style="left:342.00px;top:678.39px;width:40px;text-align:right;font-size:10.5px;line-height:10.5px;color:#262626;font-weight:normal;">2024</div>
<div class="t" style="left:395.00px;top:678.39px;width:40px;text-align:right;font-size:10.5px;line-height:10.5px;color:#262626;font-weight:normal;">6</div>
<div class="t" style="left:437.00px;top:678.39px;width:46px;text-align:right;font-size:10.5px;line-height:10.5px;color:#262626;font-weight:normal;letter-spacing:-0.1px">30000</div>
<div class="t" style="left:17.00px;top:695.12px;width:60px;text-align:right;font-size:10.5px;line-height:10.5px;color:#262626;font-weight:normal;letter-spacing:0.1px">6001</div>
<div class="t" style="left:81.00px;top:694.69px;font-size:11px;line-height:11px;color:#262626;font-weight:normal;letter-spacing:0.3px">Marketing</div>
<div class="t" style="left:201.50px;top:694.69px;font-size:11px;line-height:11px;color:#262626;font-weight:normal;letter-spacing:0.15px">Location A</div>
<div class="t" style="left:262.50px;top:694.69px;font-size:11px;line-height:11px;color:#262626;font-weight:normal;letter-spacing:0.45px">Marketing</div>
<div class="t" style="left:342.00px;top:695.12px;width:40px;text-align:right;font-size:10.5px;line-height:10.5px;color:#262626;font-weight:normal;">2024</div>
<div class="t" style="left:395.00px;top:695.12px;width:40px;text-align:right;font-size:10.5px;line-height:10.5px;color:#262626;font-weight:normal;">7</div>
<div class="t" style="left:437.00px;top:695.12px;width:46px;text-align:right;font-size:10.5px;line-height:10.5px;color:#262626;font-weight:normal;letter-spacing:-0.1px">5000</div>
<div class="t" style="left:17.00px;top:711.84px;width:60px;text-align:right;font-size:10.5px;line-height:10.5px;color:#262626;font-weight:normal;letter-spacing:0.1px">7001</div>
<div class="t" style="left:81.00px;top:711.42px;font-size:11px;line-height:11px;color:#262626;font-weight:normal;letter-spacing:0.3px">Rent</div>
<div class="t" style="left:201.50px;top:711.42px;font-size:11px;line-height:11px;color:#262626;font-weight:normal;letter-spacing:0.15px">Location B</div>
<div class="t" style="left:262.50px;top:711.42px;font-size:11px;line-height:11px;color:#262626;font-weight:normal;letter-spacing:0.45px">Rent</div>
<div class="t" style="left:342.00px;top:711.84px;width:40px;text-align:right;font-size:10.5px;line-height:10.5px;color:#262626;font-weight:normal;">2024</div>
<div class="t" style="left:395.00px;top:711.84px;width:40px;text-align:right;font-size:10.5px;line-height:10.5px;color:#262626;font-weight:normal;">7</div>
<div class="t" style="left:437.00px;top:711.84px;width:46px;text-align:right;font-size:10.5px;line-height:10.5px;color:#262626;font-weight:normal;letter-spacing:-0.1px">12000</div>
<div class="t" style="left:17.00px;top:728.57px;width:60px;text-align:right;font-size:10.5px;line-height:10.5px;color:#262626;font-weight:normal;letter-spacing:0.1px">5001</div>
<div class="t" style="left:81.00px;top:728.15px;font-size:11px;line-height:11px;color:#262626;font-weight:normal;letter-spacing:0.3px">Salaries</div>
<div class="t" style="left:201.50px;top:728.15px;font-size:11px;line-height:11px;color:#262626;font-weight:normal;letter-spacing:0.15px">Location C</div>
<div class="t" style="left:262.50px;top:728.15px;font-size:11px;line-height:11px;color:#262626;font-weight:normal;letter-spacing:0.45px">HR</div>
<div class="t" style="left:342.00px;top:728.57px;width:40px;text-align:right;font-size:10.5px;line-height:10.5px;color:#262626;font-weight:normal;">2024</div>
<div class="t" style="left:395.00px;top:728.57px;width:40px;text-align:right;font-size:10.5px;line-height:10.5px;color:#262626;font-weight:normal;">7</div>
<div class="t" style="left:437.00px;top:728.57px;width:46px;text-align:right;font-size:10.5px;line-height:10.5px;color:#262626;font-weight:normal;letter-spacing:-0.1px">35000</div>
<div class="t" style="left:17.00px;top:745.30px;width:60px;text-align:right;font-size:10.5px;line-height:10.5px;color:#262626;font-weight:normal;letter-spacing:0.1px">4001</div>
<div class="t" style="left:81.00px;top:744.87px;font-size:11px;line-height:11px;color:#262626;font-weight:normal;letter-spacing:0.3px">Subscription Revenue</div>
<div class="t" style="left:201.50px;top:744.87px;font-size:11px;line-height:11px;color:#262626;font-weight:normal;letter-spacing:0.15px">Location A</div>
<div class="t" style="left:262.50px;top:744.87px;font-size:11px;line-height:11px;color:#262626;font-weight:normal;letter-spacing:0.45px">Sales</div>
<div class="t" style="left:342.00px;top:745.30px;width:40px;text-align:right;font-size:10.5px;line-height:10.5px;color:#262626;font-weight:normal;">2024</div>
<div class="t" style="left:395.00px;top:745.30px;width:40px;text-align:right;font-size:10.5px;line-height:10.5px;color:#262626;font-weight:normal;">7</div>
<div class="t" style="left:437.00px;top:745.30px;width:46px;text-align:right;font-size:10.5px;line-height:10.5px;color:#262626;font-weight:normal;letter-spacing:-0.1px">29000</div>
<div class="t" style="left:17.00px;top:762.02px;width:60px;text-align:right;font-size:10.5px;line-height:10.5px;color:#262626;font-weight:normal;letter-spacing:0.1px">4002</div>
<div class="t" style="left:81.00px;top:761.60px;font-size:11px;line-height:11px;color:#262626;font-weight:normal;letter-spacing:0.3px">Professional Services</div>
<div class="t" style="left:201.50px;top:761.60px;font-size:11px;line-height:11px;color:#262626;font-weight:normal;letter-spacing:0.15px">Location B</div>
<div class="t" style="left:262.50px;top:761.60px;font-size:11px;line-height:11px;color:#262626;font-weight:normal;letter-spacing:0.45px">Sales</div>
<div class="t" style="left:342.00px;top:762.02px;width:40px;text-align:right;font-size:10.5px;line-height:10.5px;color:#262626;font-weight:normal;">2024</div>
<div class="t" style="left:395.00px;top:762.02px;width:40px;text-align:right;font-size:10.5px;line-height:10.5px;color:#262626;font-weight:normal;">7</div>
<div class="t" style="left:437.00px;top:762.02px;width:46px;text-align:right;font-size:10.5px;line-height:10.5px;color:#262626;font-weight:normal;letter-spacing:-0.1px">25000</div>
<div class="t" style="left:17.00px;top:778.75px;width:60px;text-align:right;font-size:10.5px;line-height:10.5px;color:#262626;font-weight:normal;letter-spacing:0.1px">6001</div>
<div class="t" style="left:81.00px;top:778.32px;font-size:11px;line-height:11px;color:#262626;font-weight:normal;letter-spacing:0.3px">Marketing</div>
<div class="t" style="left:201.50px;top:778.32px;font-size:11px;line-height:11px;color:#262626;font-weight:normal;letter-spacing:0.15px">Location A</div>
<div class="t" style="left:262.50px;top:778.32px;font-size:11px;line-height:11px;color:#262626;font-weight:normal;letter-spacing:0.45px">Marketing</div>
<div class="t" style="left:342.00px;top:778.75px;width:40px;text-align:right;font-size:10.5px;line-height:10.5px;color:#262626;font-weight:normal;">2024</div>
<div class="t" style="left:395.00px;top:778.75px;width:40px;text-align:right;font-size:10.5px;line-height:10.5px;color:#262626;font-weight:normal;">8</div>
<div class="t" style="left:437.00px;top:778.75px;width:46px;text-align:right;font-size:10.5px;line-height:10.5px;color:#262626;font-weight:normal;letter-spacing:-0.1px">5000</div>
<div class="t" style="left:17.00px;top:795.47px;width:60px;text-align:right;font-size:10.5px;line-height:10.5px;color:#262626;font-weight:normal;letter-spacing:0.1px">7001</div>
<div class="t" style="left:81.00px;top:795.05px;font-size:11px;line-height:11px;color:#262626;font-weight:normal;letter-spacing:0.3px">Rent</div>
<div class="t" style="left:201.50px;top:795.05px;font-size:11px;line-height:11px;color:#262626;font-weight:normal;letter-spacing:0.15px">Location B</div>
<div class="t" style="left:262.50px;top:795.05px;font-size:11px;line-height:11px;color:#262626;font-weight:normal;letter-spacing:0.45px">Rent</div>
<div class="t" style="left:342.00px;top:795.47px;width:40px;text-align:right;font-size:10.5px;line-height:10.5px;color:#262626;font-weight:normal;">2024</div>
<div class="t" style="left:395.00px;top:795.47px;width:40px;text-align:right;font-size:10.5px;line-height:10.5px;color:#262626;font-weight:normal;">8</div>
<div class="t" style="left:437.00px;top:795.47px;width:46px;text-align:right;font-size:10.5px;line-height:10.5px;color:#262626;font-weight:normal;letter-spacing:-0.1px">12000</div>
<div class="t" style="left:17.00px;top:812.20px;width:60px;text-align:right;font-size:10.5px;line-height:10.5px;color:#262626;font-weight:normal;letter-spacing:0.1px">5001</div>
<div class="t" style="left:81.00px;top:811.78px;font-size:11px;line-height:11px;color:#262626;font-weight:normal;letter-spacing:0.3px">Salaries</div>
<div class="t" style="left:201.50px;top:811.78px;font-size:11px;line-height:11px;color:#262626;font-weight:normal;letter-spacing:0.15px">Location C</div>
<div class="t" style="left:262.50px;top:811.78px;font-size:11px;line-height:11px;color:#262626;font-weight:normal;letter-spacing:0.45px">HR</div>
<div class="t" style="left:342.00px;top:812.20px;width:40px;text-align:right;font-size:10.5px;line-height:10.5px;color:#262626;font-weight:normal;">2024</div>
<div class="t" style="left:395.00px;top:812.20px;width:40px;text-align:right;font-size:10.5px;line-height:10.5px;color:#262626;font-weight:normal;">8</div>
<div class="t" style="left:437.00px;top:812.20px;width:46px;text-align:right;font-size:10.5px;line-height:10.5px;color:#262626;font-weight:normal;letter-spacing:-0.1px">35000</div>
<div class="t" style="left:17.00px;top:828.93px;width:60px;text-align:right;font-size:10.5px;line-height:10.5px;color:#262626;font-weight:normal;letter-spacing:0.1px">4001</div>
<div class="t" style="left:81.00px;top:828.50px;font-size:11px;line-height:11px;color:#262626;font-weight:normal;letter-spacing:0.3px">Subscription Revenue</div>
<div class="t" style="left:201.50px;top:828.50px;font-size:11px;line-height:11px;color:#262626;font-weight:normal;letter-spacing:0.15px">Location A</div>
<div class="t" style="left:262.50px;top:828.50px;font-size:11px;line-height:11px;color:#262626;font-weight:normal;letter-spacing:0.45px">Sales</div>
<div class="t" style="left:342.00px;top:828.93px;width:40px;text-align:right;font-size:10.5px;line-height:10.5px;color:#262626;font-weight:normal;">2024</div>
<div class="t" style="left:395.00px;top:828.93px;width:40px;text-align:right;font-size:10.5px;line-height:10.5px;color:#262626;font-weight:normal;">8</div>
<div class="t" style="left:437.00px;top:828.93px;width:46px;text-align:right;font-size:10.5px;line-height:10.5px;color:#262626;font-weight:normal;letter-spacing:-0.1px">35000</div>
<div class="t" style="left:17.00px;top:845.65px;width:60px;text-align:right;font-size:10.5px;line-height:10.5px;color:#262626;font-weight:normal;letter-spacing:0.1px">4002</div>
<div class="t" style="left:81.00px;top:845.23px;font-size:11px;line-height:11px;color:#262626;font-weight:normal;letter-spacing:0.3px">Professional Services</div>
<div class="t" style="left:201.50px;top:845.23px;font-size:11px;line-height:11px;color:#262626;font-weight:normal;letter-spacing:0.15px">Location B</div>
<div class="t" style="left:262.50px;top:845.23px;font-size:11px;line-height:11px;color:#262626;font-weight:normal;letter-spacing:0.45px">Sales</div>
<div class="t" style="left:342.00px;top:845.65px;width:40px;text-align:right;font-size:10.5px;line-height:10.5px;color:#262626;font-weight:normal;">2024</div>
<div class="t" style="left:395.00px;top:845.65px;width:40px;text-align:right;font-size:10.5px;line-height:10.5px;color:#262626;font-weight:normal;">8</div>
<div class="t" style="left:437.00px;top:845.65px;width:46px;text-align:right;font-size:10.5px;line-height:10.5px;color:#262626;font-weight:normal;letter-spacing:-0.1px">25000</div>
<div class="t" style="left:17.00px;top:862.38px;width:60px;text-align:right;font-size:10.5px;line-height:10.5px;color:#262626;font-weight:normal;letter-spacing:0.1px">6001</div>
<div class="t" style="left:81.00px;top:861.95px;font-size:11px;line-height:11px;color:#262626;font-weight:normal;letter-spacing:0.3px">Marketing</div>
<div class="t" style="left:201.50px;top:861.95px;font-size:11px;line-height:11px;color:#262626;font-weight:normal;letter-spacing:0.15px">Location A</div>
<div class="t" style="left:262.50px;top:861.95px;font-size:11px;line-height:11px;color:#262626;font-weight:normal;letter-spacing:0.45px">Marketing</div>
<div class="t" style="left:342.00px;top:862.38px;width:40px;text-align:right;font-size:10.5px;line-height:10.5px;color:#262626;font-weight:normal;">2024</div>
<div class="t" style="left:395.00px;top:862.38px;width:40px;text-align:right;font-size:10.5px;line-height:10.5px;color:#262626;font-weight:normal;">9</div>
<div class="t" style="left:437.00px;top:862.38px;width:46px;text-align:right;font-size:10.5px;line-height:10.5px;color:#262626;font-weight:normal;letter-spacing:-0.1px">5000</div>
<div class="t" style="left:17.00px;top:879.10px;width:60px;text-align:right;font-size:10.5px;line-height:10.5px;color:#262626;font-weight:normal;letter-spacing:0.1px">7001</div>
<div class="t" style="left:81.00px;top:878.68px;font-size:11px;line-height:11px;color:#262626;font-weight:normal;letter-spacing:0.3px">Rent</div>
<div class="t" style="left:201.50px;top:878.68px;font-size:11px;line-height:11px;color:#262626;font-weight:normal;letter-spacing:0.15px">Location B</div>
<div class="t" style="left:262.50px;top:878.68px;font-size:11px;line-height:11px;color:#262626;font-weight:normal;letter-spacing:0.45px">Rent</div>
<div class="t" style="left:342.00px;top:879.10px;width:40px;text-align:right;font-size:10.5px;line-height:10.5px;color:#262626;font-weight:normal;">2024</div>
<div class="t" style="left:395.00px;top:879.10px;width:40px;text-align:right;font-size:10.5px;line-height:10.5px;color:#262626;font-weight:normal;">9</div>
<div class="t" style="left:437.00px;top:879.10px;width:46px;text-align:right;font-size:10.5px;line-height:10.5px;color:#262626;font-weight:normal;letter-spacing:-0.1px">12000</div>
<div class="t" style="left:17.00px;top:895.83px;width:60px;text-align:right;font-size:10.5px;line-height:10.5px;color:#262626;font-weight:normal;letter-spacing:0.1px">5001</div>
<div class="t" style="left:81.00px;top:895.41px;font-size:11px;line-height:11px;color:#262626;font-weight:normal;letter-spacing:0.3px">Salaries</div>
<div class="t" style="left:201.50px;top:895.41px;font-size:11px;line-height:11px;color:#262626;font-weight:normal;letter-spacing:0.15px">Location C</div>
<div class="t" style="left:262.50px;top:895.41px;font-size:11px;line-height:11px;color:#262626;font-weight:normal;letter-spacing:0.45px">HR</div>
<div class="t" style="left:342.00px;top:895.83px;width:40px;text-align:right;font-size:10.5px;line-height:10.5px;color:#262626;font-weight:normal;">2024</div>
<div class="t" style="left:395.00px;top:895.83px;width:40px;text-align:right;font-size:10.5px;line-height:10.5px;color:#262626;font-weight:normal;">9</div>
<div class="t" style="left:437.00px;top:895.83px;width:46px;text-align:right;font-size:10.5px;line-height:10.5px;color:#262626;font-weight:normal;letter-spacing:-0.1px">35000</div>
<div class="t" style="left:17.00px;top:912.56px;width:60px;text-align:right;font-size:10.5px;line-height:10.5px;color:#262626;font-weight:normal;letter-spacing:0.1px">4001</div>
<div class="t" style="left:81.00px;top:912.13px;font-size:11px;line-height:11px;color:#262626;font-weight:normal;letter-spacing:0.3px">Subscription Revenue</div>
<div class="t" style="left:201.50px;top:912.13px;font-size:11px;line-height:11px;color:#262626;font-weight:normal;letter-spacing:0.15px">Location A</div>
<div class="t" style="left:262.50px;top:912.13px;font-size:11px;line-height:11px;color:#262626;font-weight:normal;letter-spacing:0.45px">Sales</div>
<div class="t" style="left:342.00px;top:912.56px;width:40px;text-align:right;font-size:10.5px;line-height:10.5px;color:#262626;font-weight:normal;">2024</div>
<div class="t" style="left:395.00px;top:912.56px;width:40px;text-align:right;font-size:10.5px;line-height:10.5px;color:#262626;font-weight:normal;">9</div>
<div class="t" style="left:437.00px;top:912.56px;width:46px;text-align:right;font-size:10.5px;line-height:10.5px;color:#262626;font-weight:normal;letter-spacing:-0.1px">41000</div>
<div class="b" style="left:19.00px;top:923.67px;width:466.00px;height:2.00px;background:#9fd3b5"></div>
<div class="b" style="left:78.50px;top:221.18px;width:122.50px;height:18.73px;border:2px solid #2b6446;box-sizing:border-box"></div>
<div class="b" style="left:198.50px;top:237.40px;width:4.00px;height:4.00px;background:#2b6446;border:1px solid #fff"></div>
<div class="b" style="left:17.50px;top:222.18px;width:2.00px;height:16.73px;background:#2b6446"></div>
<div class="b" style="left:1585.00px;top:156.00px;width:15.50px;height:771.00px;background:#ecece9"></div>
<div class="b" style="left:1587.50px;top:158.00px;width:12.00px;height:13.00px;background:#fff;border:1px solid #c4c4c4;box-sizing:border-box"></div>
<svg class="b" style="left:1590px;top:162px;" width="7" height="5" viewBox="0 0 7 5"><path d="M0 4h7L3.5 0z" fill="#333"/></svg>
<div class="b" style="left:1587.50px;top:172.00px;width:12.50px;height:355.00px;background:#fff;border:1px solid #c4c4c4;box-sizing:border-box;border-radius:2px"></div>
<div class="b" style="left:1587.50px;top:915.50px;width:12.00px;height:12.00px;background:#fff;border:1px solid #c4c4c4;box-sizing:border-box"></div>
<svg class="b" style="left:1590px;top:919px;" width="7" height="5" viewBox="0 0 7 5"><path d="M0 0h7L3.5 4z" fill="#333"/></svg>
<div class="b" style="left:0.00px;top:927.00px;width:1600.00px;height:20.00px;background:#e9e9e7"></div>
<div class="b" style="left:0.00px;top:927.00px;width:1600.00px;height:1.00px;background:#cfcfcd"></div>
<svg class="b" style="left:16px;top:933px;" width="6" height="9" viewBox="0 0 6 9"><path d="M4.5 1L1.5 4.5 4.5 8" stroke="#c0c0c0" fill="none"/></svg>
<svg class="b" style="left:43px;top:933px;" width="6" height="9" viewBox="0 0 6 9"><path d="M1.5 1l3 3.5-3 3.5" stroke="#c0c0c0" fill="none"/></svg>
<div class="b" style="left:81.50px;top:927.00px;width:61.50px;height:20.00px;background:#fff;border-left:1px solid #c8c8c8;border-right:1px solid #c8c8c8;box-sizing:border-box"></div>
<div class="b" style="left:82.00px;top:945.00px;width:60.50px;height:2.00px;background:#2f6e4b"></div>
<div class="t" style="left:91.50px;top:932.61px;font-size:10.5px;line-height:10.5px;color:#2f6b4a;font-weight:bold;">GL Data</div>
<div class="t" style="left:153.50px;top:932.61px;font-size:10.5px;line-height:10.5px;color:#555;font-weight:normal;">Deal Data</div>
<div class="b" style="left:212.50px;top:930.00px;width:1.00px;height:15.00px;background:#c4c4c4"></div>
<svg class="b" style="left:240px;top:931px;" width="15" height="15" viewBox="0 0 15 15"><circle cx="7.5" cy="7.5" r="6.2" fill="none" stroke="#777" stroke-width="1"/><path d="M7.5 4v7M4 7.5h7" stroke="#666" stroke-width="1.1"/></svg>
<div class="b" style="left:960.50px;top:935.00px;width:1.20px;height:1.50px;background:#b8b8b8"></div>
<div class="b" style="left:960.50px;top:938.50px;width:1.20px;height:1.50px;background:#b8b8b8"></div>
<div class="b" style="left:960.50px;top:942.00px;width:1.20px;height:1.50px;background:#b8b8b8"></div>
<div class="b" style="left:974.50px;top:932.00px;width:613.00px;height:13.00px;background:#fff;border:1px solid #c4c4c4;box-sizing:border-box;border-radius:2px"></div>
<div class="b" style="left:974.50px;top:932.00px;width:13.00px;height:13.00px;background:#fff;border:1px solid #b8b8b8;box-sizing:border-box"></div>
<svg class="b" style="left:978px;top:935px;" width="5" height="7" viewBox="0 0 5 7"><path d="M4.5 0v7L0.5 3.5z" fill="#222"/></svg>
<div class="b" style="left:1561.50px;top:932.00px;width:26.00px;height:13.00px;background:#ecece9"></div>
<div class="b" style="left:1572.00px;top:932.50px;width:12.50px;height:12.50px;background:#fff;border:1px solid #b8b8b8;box-sizing:border-box"></div>
<svg class="b" style="left:1576px;top:935px;" width="5" height="7" viewBox="0 0 5 7"><path d="M0.5 0v7L4.5 3.5z" fill="#222"/></svg>
<div class="b" style="left:460.00px;top:753.00px;width:688.50px;height:106.50px;background:#fff;border:7.5px solid #2c6847;box-sizing:border-box;border-radius:15px"></div>
<div class="t" style="left:506.50px;top:784.77px;font-size:48px;line-height:48px;color:#3b3d3f;font-weight:normal;letter-spacing:0.5px;-webkit-text-stroke:0">Select Insert -&gt; Pivot Table</div>
<svg class="b" style="left:28px;top:48px;" width="30" height="40" viewBox="0 0 30 40"><path d="M5.3 4.5V30.5L10.5 26L15 35L20 32.5L15.5 24L24 23.5Z" fill="#eaf000" stroke="#1e1e1e" stroke-width="1.8" stroke-linejoin="round"/></svg>
</body></html>
